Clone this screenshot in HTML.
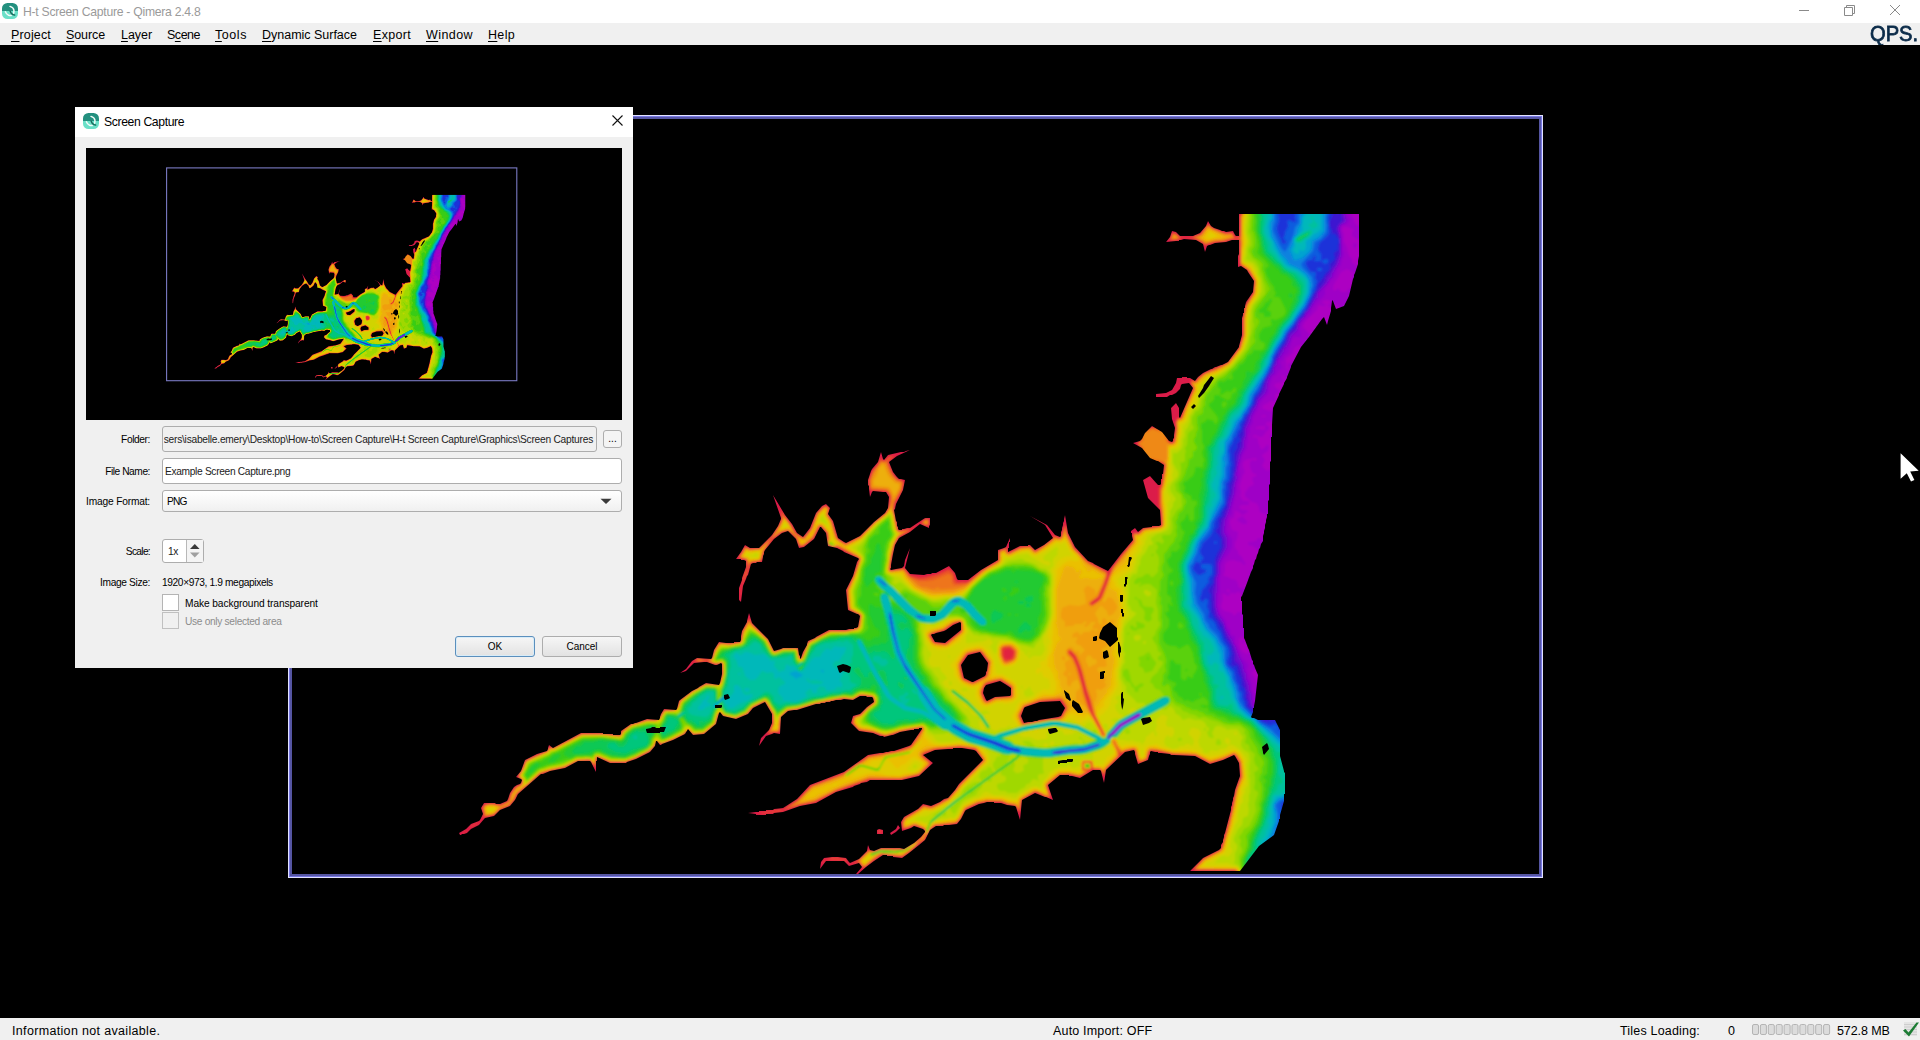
<!DOCTYPE html>
<html lang="en">
<head>
<meta charset="utf-8">
<title>H-t Screen Capture - Qimera 2.4.8</title>
<style>
*{box-sizing:border-box;margin:0;padding:0}
html,body{width:1920px;height:1040px;overflow:hidden;background:#000}
body{position:relative;font-family:"Liberation Sans",sans-serif;font-size:12px;color:#000}
.abs{position:absolute}
.t{position:absolute;white-space:nowrap;line-height:1}
#titlebar{left:0;top:0;width:1920px;height:23px;background:#fff}
#menubar{left:0;top:23px;width:1920px;height:22px;background:#f0f0f0}
#status{left:0;top:1018px;width:1920px;height:22px;background:#f0f0f0}
.m{position:absolute;top:28px;font-size:12.5px;line-height:14px;white-space:nowrap;color:#000}
.m u{text-decoration:underline;text-decoration-thickness:1px;text-underline-offset:1.5px}
.s{position:absolute;top:1023.5px;font-size:12.5px;line-height:14px;white-space:nowrap;color:#000}
#dlg{left:75px;top:107px;width:558px;height:561px;background:#f0f0f0}
#dlgtitle{left:0;top:0;width:558px;height:30px;background:#fff}
.lbl{position:absolute;font-size:10.2px;line-height:12px;white-space:nowrap;text-align:right;width:120px;left:-45px;color:#000}
.fld{position:absolute;border:1px solid #adadad;border-radius:3px;font-size:10.2px;line-height:12px;white-space:nowrap;overflow:hidden}
.btn{position:absolute;border:1px solid #adadad;border-radius:3px;background:linear-gradient(#f6f6f6,#e2e2e2);font-size:10px;text-align:center;line-height:12px}
.cb{position:absolute;width:17px;height:17px;border:1px solid #b4b4b4;background:#fff}
/*LS*/#ttl{letter-spacing:-0.266px}#m1{letter-spacing:0.154px}#m2{letter-spacing:-0.104px}#m3{letter-spacing:-0.056px}#m4{letter-spacing:-0.491px}#m5{letter-spacing:0.562px}#m6{letter-spacing:-0.013px}#m7{letter-spacing:0.310px}#m8{letter-spacing:0.419px}#m9{letter-spacing:0.320px}#s1{letter-spacing:0.332px}#s2{letter-spacing:0.171px}#s3{letter-spacing:0.188px}#s5{letter-spacing:-0.089px}#dt{letter-spacing:-0.370px}#l1{letter-spacing:-0.403px}#l2{letter-spacing:-0.447px}#l3{letter-spacing:-0.181px}#l4{letter-spacing:-0.688px}#l5{letter-spacing:-0.345px}#f2{letter-spacing:-0.321px}#f3{letter-spacing:-0.793px}#f4{letter-spacing:-0.383px}#f5{letter-spacing:-0.375px}#c1{letter-spacing:-0.095px}#c2{letter-spacing:-0.320px}#f1{letter-spacing:-0.230px}/*ENDLS*/
</style>
</head>
<body>
<!-- main 3D scene -->
<svg class="abs" style="left:0;top:45px" width="1920" height="973" viewBox="0 45 1920 973">
<defs>
<filter id="soft" x="-2%" y="-2%" width="104%" height="104%"><feGaussianBlur stdDeviation="0.8"/></filter><clipPath id="landclip"><path clip-rule="evenodd" d="M877 830l0 4 6 0 0-4-4-1zM898 825l-2 4-6 4 1 2 5-3 4-4zM1359 214l-120 0 0 22-3 0-1-1-2-4-7 1-2-1-2 0-2-1-6-2-3-2-3-5-2 5-6 7-7 3-2 0-11 0-4-4-4-1-2 6-4 5 10-1 1 0 2 0 0-1 2 0 3-1 12 1 7 4 2 8 2-6 2-1 1 0 5-2 11-1 6-2 7 0 0 1 0 13-1 2 0 11 3-1 6 4 1 2 6 9-1 11-7 10-1 4 0 2-1 0 0 2 0 1 0 2-1 0 0 2-1 3 0 17-3 11 0 1-11 15-6 3-1 0-5 2-1 0-3 2-1 0-8 4-5 4-3 4-5-3-3 0 0-1-5 0 0 1-5 0-1 5-4 7-6 3-10 1 0 3 11 0 3-2 2 0 4-2 4-4 1-4 1-1 7-1 4 5-13 30-1-1 0-9-3-5-5 5 1 11 3 9-1 7 0 1 0 2-1 1 0 2-1 1-3-1-7-9-10-6-7 7-3 6-2 2-7 2 9 5 8 10 7 3 1 0 3 2 3 2-1 9-1 0 0 2 0 1 0 2-1 0 0 2 0 1 0 2-1 1-2 0-8-9-7 4 5 18 12 12 1 15-2 1-3 0-1 0-3 0 0 1-9 1-5 4-3-4-4 3 0 2 1 0 0 3 1 4-12 14-13 17-14-7-1-1-5-2-13-14-7-14-3-18-1 4 0 2-1 2 0 2-1 3 0 2-1 2 0 2 0 1 0 1-1 1-5-2-8-10-17-9 15 9 8 13-9 7-9 5-5-5-2 0 0 1-8 0-12 6 0-1 0-3 1 0 0-3 0-3 1 0 0-4-4 9-2 1-6 2 0 10-17 10-13 10-10 0-1-1-2-6-6-7-13 7-2 0-2 0-1 1-2 0-2 0-3 1-14-1-5-6 5-20-5 12-1 6-2 2-6 1-5 1-1-1 1-1 0-2 0-1 2-11 2-9 4-7 11-6 10-8 9 4 0-2 1-1 0-7-2 0-3 0-3 2-12 8-3 0-3 1-2 0 0 1-2 0-1 0-1-1 0-2-1-1 0-2 0-2-1-1-2-11 1-1 1-5 7-14 2-10-4-1-2 0-2-2-4-5-4-10 8-6 13-6-4 1-2 1-2 0-1 0-13 3-4 5-1-1-2-7-3 10-6 7-1 2-1 3-2 6 0 2 0 3 1 1 0 3 1 8 2-5 1-1 10 1 3 0 3 5-1 11-3 5-11 9-14 14-14 7-2-1-6-4-5-17-5-7 2-6-4-4-4 2-6 7-6 15-7 9-6-4-5-9-7-9-12-20 8 23 0 1-3 7-6 9-13 13-9 0-5-3-4 7-5 7 5 0 0 1 3 0 2 1 0 6-4 11 0 2-3 8 0 12 2 2 2-16 3-7 1-3 1-1 3-11 2-1 3 0 1-1 5 0 1-5 0-1 1-2 0-2 1-2 9-11 8-6 6-2 8 8 3 9 5-1 10-8 6-12 1 0 5 6 2 13 9 2 6 3 1 1 14 6 1 1-2 3-4 14-7 14 2 20 9 4 1 0 2 2-2 11-2 1-2 0 0 1-2 0-1 0-2 0-3 1-17 0-13 7-1 1-7 3-1 3 0 1-4 7-2 6-1 1 0-1 0-2-1-1-1-7-15 0-2 1-7 2-6-12-16-16-3-10-2 8 0 1-5 9-1 5 0 1 0 3-1 2-6 0 0 1-4 0-3 0-1 0-7-1-5 8-2 8-1 1-14-1-5 3-6 8-6 4 6-2 8-8 10-1 1 0 2 0 8 3 2 0 4-2 1 1 0 4 0 5 0 1-2 9-1 2-13-2-7 4-1 1-6 3-12 9-1 1-2 8-1 1-12-1-3 5-1 3 0 1-1 2-12-1-11 4-1 0-2 1-2 0-10 7 0 3-1 1-7 0 0-1-5 0-5 0 0-1-22 0-28 15-4-3-1 3 0 1-1 2-10 3-12 6-4 11-5 6 5 2 1 1-1 3-1 1-3 1-3 2-4 6-2 6-1 2-7 3-4 0-1-1-3 0-8 0-3 5 2 6-3 6-1 1-8 3-5 5-7 4 1 2 1 0 1-1 2 0 3-1 4-4 8-4 6-7 9-2 6-6 10-4 5-6 3-6 23-20 2 0 7-3 15-3 13-7 6 0 6 0 1 1 5 10 0-11 1 0 0-3 0-1 13 6 16 0 1-1 9-3 14-7 5-6 1-5 1 0 3 4 1 0 1-1 11-4 12-6 3-5 5 6 11-1 12-10 3-11 1-1 3 4 13 3 12-5 5-6 12-6 7 12 0 9-3 7-8 8-2 8 7-10 6-2 2-1 6 1 1-17 7-6 6-1 1 0 2 0 19-6 2 0 2 0 1-1 2 0 2 0 1-1 2 0 2 0 1-1 2 0 3-1 2 0 1 0 2 0 3-1 9 1 7-4 2 0 1 0 3 0 1 1 5 0 1 1 1 4-7 5-7 7-7 2-2 7 8 8 14 2 7 3 3 0 1 1 8-2 1 0 7-3 11-2 1 0 2 0 0-1 2 0 1 0 2 0 0-1 2 0 1 0 0 1-11 16-2 1-15 5-3 0-3 1-2 0-3 1-3 0-12 2-24 17-34 13-13 14-14 9-9 1-1 1-3 0-1 0-3 0 0 1-4 0-3 0 0 1-3 0-8 1 8 1 0 1 3 0 3 0 4 0 0-1 3 0 1 0 3 0 1-1 9-1 17-6 16-3 20-11 17-5 1-1 6-2 1-1 6-1 3-2 31 0 1 0 17-4 14-13-10-8 12-5 13-1 5 0 0-1 5 0 4 0 12 2 2 1 7 9-24 24-4 6-7 8-4 1-4 3-9 4-8-2-5 5-14 8-3 5 1 9 9-3 3-2 9 3 2 2 0 1-4 5-7 6-10 6-4-1-19 0-7 3-4-1-2-5-1 6-8 8-9 4-1-1-3-4-8-1-1 0-5 0-8 1-3 4-1 7 6-8 18 0 5 5 10-3 3 4-6 7 2 0 8-7 8-6 9-6 4 0 0 1 3 0 3 0 0 1 9 1 7-5 10-8 6-5 5-10 6-4 2 0 1 0 4 0 1-1 5 0 8-1 4-5 4-8 1-1 13-6 5-1 3-1 7 0 0 1 7 0 6 2 8 1 1 1 4 13 2-20 13-7 10 4 1 0 7 3-5-15 12-10 9 0 0 1 2 0 1 0 8 2 13-8 7 0 1 1 3 12 2-13 19-18 9-2 1 2 0 1 0 1 3 10 10-4 1-4 1-2 0-2 1-1 4 1 3 0 0 1 3 0 9 1 1 1 2 0 1 0 21 1 15 8 13-4 11-5 1 1 4 7 1 13-5 14-1 6-1 2 0 2-1 3 0 2-1 2 0 2 0 1-6 23-1 2 0 2-1 3 0 2-2 3 0 3-2 2-16 8-13 13 50 0 19-25 15-11 5-14 0-2 1 0 0-2 0-2 4-14 0-7 1 0 0-19 0-1 0-1-1-1 0-1-4-15 0-26-5-10-17 0-4-2-2 0-1-1 2-5 0-4 1 0 0-2 1-5 3-26-3-7-1-3-1-1 0-3-1-1-3-10-1-2-3-8-1-2 0-10-1 0 0-7 0-6-1-1 0-6 0-7-1 0 0-4 1-1 5-13 4-11 1-2 1-2 0-2 1-2 1-4 1-1 1-4 1-2 1-4 1-1 1-4 2-3 0-5 1-3 0-2 1-3 0-3 1-3 0-2 1-3 0-3 1 0 0-13 1-1 0-7 0-1 0-7 1-1 0-10 0-12 1-1 0-12 0-12 1 0 0-12 1-17 6-13 0-1 5-10 0-1 3-5 0-1 4-10 0-1 10-19 8-10 13-18 2-2 3 8 1-4 3-10 0-3 1-7 1-1 0 1 3 8 8-3 5-10 4-17 1-2 0-2 1-2 1-3 2-6 0-3 1-5 0-1zM1073 759l0 2-1 1-5 0 0 1-3 0-1 0-3 0 0 1-2 0 0-1 0-2 5-1 1 0 3 0 0-1 3 0 1 0 1 0zM1267 743l1 2 1 4-5 6-1-2 0-1-1-5zM1058 731l-1 1-7 2-1-1-1-3 0-1 6-1 1 0 1 0zM666 727l-2 5-4 0 0 1-3 0-10 0-1-3 0-1 5-1 1-1 3 0 1 1 4 0 0-1 3 0 1 0 1 0zM1150 717l2 4-3 2-6 2-2-6 2-1zM722 705l0 2-1 1-2 0-1 0-3 0 0-2 0-1 3 0 1 0 2 0zM1065 708l-4 8-3 1-19 3-2 1-2 0-3 1-2 0-2 0-4 1-3-7 3-8 1-1 15-5 20-1zM1073 700l6 4 4 8-1 1-4 0-6-7 0-4zM728 694l2 4-2 1-3 1-1-2 0-3zM1122 692l1 0 0 6 1 1-1 8-1 3 0-1-1-6 0-1 0-8zM1064 690l5 4 2 6-1 1-4-3-2-7zM1011 688l0 7-1 1-15 1-8 4-1-1-3-7 1-5 2-3 14-4 5 3zM1104 671l1 0 0 2-1 0 0 5-1 1-3 0 0-1 0-6zM837 666l6-2 4 1 4 2-1 5-1 1-6-2-3 2-1-1zM980 652l8 11-1 8-1 1 0 2-1 2-12 6-1 0-8-4-3-13 7-10zM1107 650l1 2 1 5-2 1-3 1-1-2 0-5zM1119 642l2 6 0 4-1 1 0 4 0 1-1-2-1-4 0-1 0-5 0-4zM1096 636l1 0 0 4-1 1-3 0 0-1 0-3zM961 623l0 7-16 13-10-1-4-7 1-1 2 0 2-1 8-2 2-1 7-5 7-3zM1110 622l7 6 0 9 1 1 0 2-8 7-5-6-5-2-1-1 1-5 3-6zM930 611l5 0 1 0 0 4-1 1-5 0 0-1zM1122 609l1 0 0 4 1 0 0 3-1 1-1-1 0-3-1 0 0-4zM1121 595l2 0 0 6-1 1-1 0-1-1 0-6zM1127 577l1 1-1 1 0 5-1 1 0 1-1 1-1-1 0-2 1 0 0-7 1 0zM1131 557l1 1-2 4 0 3-1 2-1 0-1-2 1 0 1-8 1 0zM1194 404l2 2-3 3-2-2zM1214 378l-5 8-5 7-5 5-1-2 5-8 1-3 4-5 3-4z"/></clipPath>
</defs>
<rect x="0" y="45" width="1920" height="973" fill="#000"/>
<g id="scene">
<g id="bathy" clip-path="url(#landclip)"><g fill-rule="evenodd" filter="url(#soft)"><path fill="#db1c4a" d="M875 830l0 4 2 2 6 0 2-2 0-4-3-3-3 0zM1361 214l-2-2-120 0-2 2 0 20-4-5-7 1-13-5-5-6-2 3-6 9-2 1-7 2-11 0-4-4-4-1-2 2-2 6-4 5 2 2 10-1 8-2 12 1 6 4 1 6 2 2 2-2 1-3 1-2 6-2 11-1 6-2 5 0 0 12-1 2 0 11 2 2 3-1 4 3 7 10-1 11-8 14-3 12 0 17-3 12-9 12-6 4-19 8-8 7-5-2-3-1-10 1-2 2-1 5-3 5-5 3-10 1-2 2 0 3 2 2 11 0 9-4 6-6 1-3 5-1 3 3-9 20-6-7-7 7 1 11 3 9-1 10-1 2-3-3-6-7-10-6-9 9-4 6-5 2-3 2 3 3 7 3 9 11 8 3 4 3-3 15-1 2-8-9-6 4-3 2 5 18 12 12 1 13-16 3-4 4-4-4-6 5 2 9-23 29-20-10-11-12-7-14-3-18-2-2-2 4-4 18-4-3-8-9-17-9-2 2 3 3 13 7 6 10 0 2-15 10-5-5-10 1-9 5-1-1 2-10-2-2-2 2-4 8-6 2-2 2 0 9-15 9-13 10-9 0-2-5-8-9-15 7-10 2-13-1-4-4 5-20-2-2-3 4-5 15-9 3 0-2 2-12 2-9 3-5 1-2 9-4 10-8 9 4 2-2 1-10-2-2-2 0-6 2-12 8-10 2-1-2-3-16 2-6 7-14 2-10-3-2-5-1-3-3-5-11 6-5 13-6 2-2-2-2-22 5-3 4-1-1-1-4-2-2-2 2-3 10-7 9-3 9 2 17 2 2 2-2 2-4 11 1 1 1 1 4-1 9-2 4-10 8-14 14-14 7-7-4-4-16-5-7 2-6-6-6-4 2-8 9-6 15-4 6-2 1-4-4-4-7-7-9-11-20-3-2-2 2 8 23-3 8-6 9-11 11-9 0-5-3-2 2-4 7-5 7 2 2 8 1 0 5-4 11-3 10 0 12 4 4 2-2 2-16 5-11 2-9 1-1 9-1 2-2 3-12 6-7 9-8 6-2 6 6 3 9 2 2 6-2 8-6 3-3 4-9 1 0 3 3 2 13 2 2 9 2 19 10-5 16-7 14 2 20 2 2 8 3 2 2-2 9-10 2-17 0-21 11-2 3-5 10-1-4-2-2-15 0-8 3-5-10-16-16-2-9-3-3-2 3-2 8-5 9-1 8-1 1-11 1-8-1-3 2-3 5-3 10-9-1-5 0-4 3-4 4-3 4-7 6 3 2 5-2 8-8 13-1 8 3 4-1 1 2 0 5-2 8-1 2-11-2-14 8-12 9-3 2-2 8-11-1-2 3-5 8-10-1-16 5-9 6-4 5-15-2-22 0-28 15-4-3-2 2-1 4-9 3-12 6-2 2-4 11-5 6 6 4-2 2-3 1-3 3-4 6-1 5-2 2-5 2-8-1-8 0-5 7 2 6-2 4-8 4-5 5-7 4-2 2 3 4 7-2 5-5 7-3 6-7 9-2 6-6 10-4 7-8 2-5 21-19 10-3 15-3 13-7 11 0 4 9 3 2 2-2 0-11 1-1 11 5 16 0 10-4 14-7 7-8 1-1 3 2 12-5 12-6 3-4 5 5 11-1 14-12 2-7 1-1 2 2 13 3 12-5 6-7 10-5 1 1 5 9 0 9-3 7-8 9-2 7 2 2 8-11 7-2 6 1 2-2 1-17 5-4 9-1 19-6 28-5 9 1 7-4 10 1 2 1 0 1-5 4-7 7-7 2-2 2-2 7 10 10 14 2 12 4 15-5 18-3 0 1-9 12-15 5-26 4-24 17-34 13-13 14-13 9-3 1-19 2-14 2-2 2 2 2 14 2 21-3 17-6 16-3 20-11 34-12 31 0 18-4 16-15-8-7 0-1 8-3 23-2 16 2 1 1 6 7-24 24-4 6-5 6-17 8-8-2-11 9-7 3-3 3-3 7-1-1-3 2-1 3-6 5 3 4 9-7 3 3 12-5 7 3 1 1-9 9-10 6-4-1-19 0-7 3-2-1-4-5-2 2-1 6-6 6-9 4-4-5-9-1-13 1-5 6-1 7 2 2 7-8 17 0 5 5 9-3 2 2-6 7 2 2 2 0 16-13 9-6 19 3 7-5 10-8 6-5 3-2 4-9 3-2 4-1 18-2 6-7 4-8 12-5 8-2 14 1 6 2 6 1 2 3 3 8 2 3 2-2 2-19 12-6 16 7 3-2-5-14 10-9 9 0 11 3 13-8 6 0 3 10 2 3 2-2 2-13 17-16 7-1 1 1 2 9 3 3 10-4 2-3 2-5 22 3 21 1 15 8 13-4 10-4 2 1 2 4 1 13-5 14-4 19-10 38-1 1-15 8-15 15 2 2 50 0 3-3 17-22 16-13 5-14 5-20 1-26-5-19 0-26-5-10-2-2-17 0-4-2 3-15 3-26-14-37-3-41 22-56 5-27 2-40 3-66 6-13 12-29 10-19 20-27 2 5 2 2 2-2 4-14 0-3 3 3 7-3 3-2 5-10 4-17 5-15 1-9zM1266 746l1 3-2 2-1-3zM649 730l3-1 8 1-3 1-5 0zM1149 720l0 1-5 1-1-1 4-2zM1075 703l2 2 3 5-2 1-4-5zM1063 708l-3 6-2 1-19 3-14 3-2-5 3-7 14-5 19-1zM1009 688l-1 6-13 1-7 3-1 0-2-5 1-5 2-2 12-3zM839 667l5-1 5 2-1 2-4-1-3 1zM980 654l6 9-2 11-11 6-7-3-1-1-2-10 0-2 5-7zM1105 653l1 0 0 3-1 0zM959 625l0 5-14 11-9-1-2-3 0-1 10-3 9-6 5-2zM1110 624l5 4 1 12-5 4-6-5-4-2 1-4 3-5z"/>
<path fill="#e1233f" d="M878 831l-1 1 2 1 2 0 1-1 0-2-1 0zM1361 214l-2-2-118 0 0 2-1 2 0 20-1 1-4 0-3-5-7 1-13-6-3-3-2 1-6 9-7 2-5 1-9 0-5-4-2-1-1 1-3 8 6 0 10-3 9 1 8 4 2 2 1 3 2-3 7-2 10-1 7-2 8 0 1 1-1 24 4 2 4 3 7 11 0 9-1 4-6 9-2 4-2 12 0 17-4 12-11 14-24 11-5 4-4 4-4-2-1 1 0 3 3 4 0 2-12 28-2 1-1-2-3 6 1 8-2 11-2 2-2-2 0-2-2-2-3-4-3-3-8-5-1 2-3-1-7 7-3 5-1 1 0 2-3 2 3 3-1 2 3 1 9 11 11 5 2-1 2 1-4 19-4 4 0 17 4 5 1 15-2 1-16 2-6 5-5 0-1 2 1 6-25 31-6-3-14-8-14-13-7-14-2-12-1 2-2 11-2 3-5-2-7-8 5 9 0 2-17 12-2-1-4-4-6 0-4 1-12 6-1-1 1-7-3 4-6 2-1 9-1 2-16 9-13 10-11 0-2-7-6-6-13 6-11 2-14-1-3-2-4-6-3 2-10 2-1-1 2-16 3-10 3-6 2-2 10-4 10-8 1 0 7 3 1-3 0-5-3 0-3 1-13 9-11 2-2-2-3-17 0-3 1-6 8-14 1-7-1-2-5-1-5-5-4-10 0-2 10-8-10 2-5 4-1 0-2-3-3 7-5 5-2 3-2 7 0 8 2 5 3-2 13 2 3 4-1 11-3 5-11 10-15 14-14 7-1 0-6-3-2-3-5-15-4-7 1-6-2-3-2 0-2 1-6 6-6 16-6 8-2 1-7-5-16-26-2-2 3 9 1 5-4 8-6 9-13 12-9 1-5-3-3 7-4 5 1 1 6 0 2 2 0 6-4 10-3 12-1 10 1 1 1 0 2-15 4-11 3-10 3-2 6 0 2-1 4-11 8-11 8-7 7-1 8 7 3 8 2 1 3-1 9-7 6-11 1-2 2 1 5 6 1 10 1 3 9 1 19 10 2 2-6 17-6 15 1 15 1 4 10 4 2 2-2 11-2 2-10 2-17 0-22 11-6 15-1 1-2-1-1-7-1-2-14 0-8 4-1-1-6-11-16-16-3-7-1 3-1 3-5 9-1 8-1 2-10 2-11-1-3 5-3 9-2 2-13-1-6 4-2 3 1 0 3-2 13-2 9 3 5-1 1 1 1 10-3 8-2-1-1 2-1-1-1 3-8-1-15 7-11 9-2 2-1 4-2-1-1 2-2 1 0 2-9 0-4 7-2-1-1 2-2 0 0 2-7 0-16 4-9 6-3 6-18-2-20 0-28 14-2 0-2-1-1 2-3 3-8 3-11 5-2 2-3 9-4 5 4 4 0 3-2 2-5 3-4 5-2 7-2 2-6 3-10-2-6 1-3 4 2 7-3 5-2 1-7 4-5 5-6 3 1 1 4-1 4-5 8-4 7-7 10-2 5-5 10-4 5-6 2-6 24-21 24-6 13-6 12-1 2 2 2 5 1 1 1-10 2-1 12 5 15 0 10-4 14-7 6-5 1-2 1 0 1 1 1-2 2 1 12-4 12-6 0-1 3 0 0-1 1 1 1-1 4 3 11-2 11-9 2-9 2 1 2-2 1 2 12 3 12-5 6-7 10-5 2 0 8 12 0 10-4 6-3 5 1 0 6-3 6 1 1-4 1-12 2-3 6-4 8-1 18-5 28-6 10 1 6-3 4-1 9 2 2 1 1 4-7 5-7 7-8 3-1 6 8 8 14 1 10 4 2 0 15-5 18-3 3 0 1 1-12 16-2 2-12 4-30 5-23 17-33 13-13 13-13 9-3 1-26 4 0 1 8 0 15-2 20-6 16-4 22-11 32-11 31 0 20-5 11-12-6-5-2-3 2-2 9-3 23-3 6 0 11 2 4 3 5 8-23 24-5 7-7 7-17 9-8-2-11 8-8 5-2 4 0 5 1 2 11-3 2 0 8 3 1 2 0 1-7 8-7 5-7 4-5-1-17 0-8 3-2 0-4-2-1 3-8 7-8 4-2 0-4-5-12-1-9 2-2 3 0 3 4-5 18 1 6 4 9-2 2 1 1 3-2 4 1 0 12-11 9-6 16 3 5 0 6-4 9-9 7-4 4-9 5-5 4-1 15-1 4-1 4-4 5-10 12-6 8-1 16 0 6 3 6 0 2 2 4 8 2-15 10-6 4-2 9 5 6 1 0-2-4-11 1-1 12-9 10 0 8 2 3 0 11-7 8 0 1 1 3 7 2-8 14-14 1 2 2-1-1-2 3-3 9-2 1 1 3 12 8-3 2-2 1-5 2-2 24 4 21 1 14 7 14-4 9-4 1 0 2 2 4 5 1 14-5 13-4 21-11 39-1 1-17 8-9 10-1 2 42 1 1 2 4 0 3-3 17-22 16-13 5-14 5-20 1-26-5-19 0-26-5-10-2-2-17 0-4-2 3-15 3-26-14-37-3-41 22-56 5-27 2-40 3-66 6-13 12-29 10-19 20-27 2 5 2 2 2-2 4-14 0-3 3 3 7-3 3-2 5-10 4-17 5-15 1-9zM1266 746l1 3-2 2-1-3zM649 730l3-1 8 1-3 1-5 0zM1149 720l0 1-5 1-1-1 4-2zM1075 703l2 2 3 5-2 1-4-5zM1065 707l0 2-3 7-3 2-19 2-16 4-1-2-3-6 0-1 5-8 14-5 22-2zM1011 687l0 8-1 1-14 1-10 4-1-1-3-6 1-5 4-5 3-1 0 3 1-1-1-2 9-3 3 1zM839 667l5-1 5 2-1 2-4-1-3 1zM1105 653l1 0 0 3-1 0zM981 652l8 10-3 13-1 2-11 5-2 0-7-3-3-4-2-8 1-3 6-10zM1110 624l5 4 1 12-5 4-6-5-4-2 1-4 3-5zM961 623l0 8-15 13-11-2-5-6 2-2 14-4 8-6 5-2z"/>
<path fill="#e63533" d="M878 831l0 2 4-1-1-2-2 0zM929 519l-3 0-7 5 2-1 7 3 1-1zM1361 214l-2-2-117 0 0 2-2 1 0 21-1 1-4 0-3-4-7 0-13-5-3-4-2 1-6 9-9 3-12 0-4-3-2-1-2 0 0 3-3 4 7 0 11-2 2 1 7 0 7 4 2 3 3-2 6-2 11-1 6-2 8 0 1 2 0 24 9 6 6 10-1 11-8 14-3 12 0 17-3 12-2 4-10 12-24 11-5 3-3 4-2 0-2-1-1 0 0 3 3 6-13 28-1 1-2 0-2 3 0 8-2 12-1 2-2 0-2-2 0-2-7-9-5-3-2 1-4 0-1-2-7 7-3 5-1 1 1 2-3 3 3 3-1 2 4 3 4 5 5 4 8 3 2-1 2 1 1 2-3 17-3 7 0 17 2 3 1 14-1 2-16 2-2 1-4 4-6 1 1 5-1 2-13 16-6 9-5 9-2 7-6 15-5 5-3 2-1 0-1-1 8-6 5-12 4-12-1-1-19-10-14-14-7-13-1-10-1-2-3 13-2 2-5-2-3-3 1 3 0 2-8 7-9 6-2 0-5-5-8 1-11 6-2 0-1-2 0-4-2 2-6 2 0 9-3 3-15 8-13 11-11 0-1-2-2-7-5-4-1 0-11 5-13 3-5 0-8-1-4-3-3-5-11 3-3 0 0-5 2-14 2-7 4-7 1-2 12-6 7-6-9 5-7 2-4 0-1-1-4-20 2-7 7-12 2-9-1-1-5-2-4-3-2-4-4-8 0-2 8-7-6 1-6 5-1 0-2-3-1 0-2 6-5 6-4 11 1 7 1 3 6-1 10 1 3 5-1 10-3 7-12 10-13 13-15 8-7-4-3-3-4-16-4-6 1-7-3-2-3 1-6 7-6 15-7 9-2 0-4-3-3-3-4-7-11-16 0 2 2 7-4 9-6 10-12 11-2 1-8 0-5-2-3 6-4 4 1 1 7 1 1 2 0 6-4 11-3 11 0 10 2-14 5-12 3-9 2-2 8-1 1-1 3-10 9-11 8-7 4-1 3 0 8 7 3 8 3 0 3-1 7-6 2-2 5-10 1-1 2 1 5 6 1 10 2 3 7 1 4 1 5 4 12 5 1 2 0 2-5 15-7 14 2 19 12 6-2 10-1 3-10 3-19 0-21 12-6 14-1 1-1 0-1-2-1-7-2-1-12 0-10 4-1-2-6-11-15-14-3-7-6 13-2 10-1 1-11 2-9-1-4 4-2 4-1 6-2 2-2 1-12-1-5 3-1 2 3-2 11-1 10 3 6-1 1 1 1 10-2 6-1 2-3 0-1 3-10-1-13 7-13 10-2 5-1 1-2 0 0 1-1 0-1 2-8 0-5 7-4 1 0 2-7 0-17 4-10 7-1 3-1 2-19-2-20 0-26 14-3 0-2-1-3 4-9 4-12 6-4 10-4 5 0 1 4 3 0 3-2 2-4 2-2 2-4 6-1 5-2 2-7 3-8-1-4 0-4 1-1 2 0 3 1 4-3 6-2 2-7 3-4 5-6 3 1 0 3-1 4-4 8-4 6-7 10-2 6-6 10-4 4-5 3-6 23-21 24-6 13-6 13-1 2 3 2 4 1 1 1-8 1-3 15 5 14 0 22-10 6-6 2-3 8 0 7-3 13-6 2-2 2 1 2-2 3 3 7 0 4-1 11-9 2-8 2-2 1 1 1-1 4 2 8 2 3 0 10-4 6-7 12-6 3 2 6 11 0 9-4 8-2 2 0 1 2 0 5-2 4 1 1-1 2-15 7-7 8-1 19-5 28-6 10 1 7-4 4 0 9 2 1 2 1 3-8 6-6 7-7 2-1 3 0 3 6 7 14 2 12 4 17-5 20-4 1 1-1 2-10 15-2 2-14 4-28 5-24 17-33 13-13 14-14 9-2 1-19 2-6 1 4 1 19-2 19-7 16-3 21-11 33-12 32 0 18-4 12-12-8-7 0-1 1-2 11-4 23-2 16 2 4 3 5 7 0 2-24 24-4 7-6 6-7 4-11 5-8-1-10 7-8 5-3 5 1 6 2 0 10-4 8 3 2 2 0 3-4 5-10 8-6 3-24 0-7 3-6-2-1 2-7 7-9 5-2 0-4-5-8-1-12 1-3 3 0 2 4-4 18 0 6 5 8-3 2 1 2 3 0 3 13-10 8-5 19 3 6-4 10-9 6-4 5-10 5-4 5-1 17-2 5-5 3-7 2-2 11-6 10-2 14 1 7 2 5 1 3 1 3 7 1 0 1-13 13-8 3 0 7 4 6 2 0-3-3-8 0-2 12-10 10-1 8 2 4 0 11-7 8 0 2 2 2 6 2-8 15-15 4-3 8-2 3 3 2 10 2 0 6-2 1-1 2-7 2-2 23 4 21 1 15 8 2 0 11-4 10-4 2 0 1 1 4 7 1 13-5 14-4 19-10 39-2 2-17 9-9 9 0 2 41 0 1 1 0 2 4 0 3-3 17-22 16-13 5-14 5-20 1-26-5-19 0-26-5-10-2-2-17 0-4-2 3-15 3-26-14-37-3-41 22-56 5-27 2-40 3-66 6-13 12-29 10-19 20-27 2 5 2 2 2-2 4-14 0-3 3 3 7-3 3-2 5-10 4-17 5-15 1-9zM1266 746l1 3-2 2-1-3zM649 730l3-1 8 1-3 1-5 0zM1149 720l0 1-5 1-1-1 4-2zM1075 703l2 2 3 5-2 1-4-5zM1066 707l0 2-4 7-3 2-19 3-16 3-2-2-2-6 4-9 15-6 22-1zM1011 687l1 8-2 2-15 1-9 4-2-2-2-7 1-5 4-5 12-3 3 0zM839 667l5-1 5 2-1 2-4-1-3 1zM1105 653l1 0 0 3-1 0zM1070 652l1 0 4 5 4 9 3 7 4 18 6 20 0 1-7-19-7-26-4-9-4-5zM980 651l2 1 7 11-2 11-2 3-10 5-3 1-7-3-2-2-3-13 7-11 2-1zM1006 649l4 0 3 3-1 5-4 2-1 0-2-1-1-4 0-3zM1110 624l5 4 1 12-5 4-6-5-4-2 1-4 3-5zM961 622l0 9-16 13-8-1-3-1-4-6 0-1 1-1 13-4 10-7 4-1z"/>
<path fill="#eb5725" d="M827 859l17 1 3 2-2-3-13-1zM878 831l1 1 2 0 0-1zM478 823l-6 3-1 1zM929 520l-1-1-3 1-3 2-1 1 7 3 1-3zM1170 240l6 0 5-2-5-4-3-1zM1361 214l-2-2-117 0 0 2-1 1 0 20-1 2-5 1-2-2-1-3-8 0-13-5-2-3-1 0-7 9-10 4 6 1 7 4 1 2 4-2 6-1 8-1 8-2 8 0 1 1 1 25 8 5 6 10-1 13-7 10-2 7-2 10 0 17-3 11-12 15-24 11-5 4-3 4-5-1 0 3 3 3 0 3-9 18-3 9-2 2-2 0-2 3 0 9-1 9-2 3-3 0-2-3 1-1-4-6-3-3-5-3-1 2-3-1-3 1-2-1-5 5-3 6 1 2-3 2 0 1 3 3-1 2 3 3 7 8 7 3 3-1 4 1 1 2 0 3-3 17-2 4 0 18 2 4 0 14-2 2-16 2-4 4-3 1-2-1-2 1 1 7-13 16-7 9-4 8-3 9-7 16-3 3-5 3-1 0-1-2 1-1 7-5 6-12 3-9 0-3-19-11-14-13-7-15-2-9-3 11-2 2-2 0-4-2 0 2-3 3-15 10-2 0-4-4-10 1-10 5-2 0-1-1 0-4-8 3 0 10-2 1-16 10-8 7-6 4-11 0-2-3-1-6-4-4-4 2-7 3-15 4-4 0-10-3-5-7-13 2-2-1 3-19 2-7 5-8 9-4 3-3-11 2-2 0-1-2-4-17 0-4 2-6 7-12 1-8-2-1-3-1-3-2-3-5-4-9 0-3 5-5-4 1-4 4-2 0-2-1-1 0-1 4-6 7-4 9 1 8 1 2 16 1 4 5-1 10-4 7-12 10-14 14-13 7-3 0-6-4-2-4-4-14-5-7 1-7-2-2-3 1-5 5-2 4-4 12-6 8-2 2-1 0-5-3-3-2-4-7-10-15 1 8-2 6-9 13-12 11-9 0-5-2-2 5-4 5 1 1 5 1 2 1 0 8-4 10-1 6 5-10 3-10 2-2 7-1 2-1 2-8 7-11 10-9 8-2 9 9 2 6 4 1 10-8 6-11 1-1 1 0 6 6 1 6 0 4 2 3 5 2 3 0 20 10 2 2-6 16-7 16 1 14 1 4 10 5 2 2-2 10-2 3-11 2-16 0-21 11-6 14-2 3-1-1-1-1-1-7-1-1-14 0-4 2-5 1-6-12-17-16-2-5-2 6-4 6-1 9-2 3-10 1-11-1-4 8-2 7-2 2-13-1-4 2 6 1 7-1 8 3 4-1 3 0 1 10-2 8-1 2-2 0-1 2-3 0-8-1-13 7-12 9-2 3-1 4-1 1-2-1-1 1 0 2-10 1-4 7-3 0-1 2-9 0-15 5-9 6-2 4-2 1-16-2-21 0-28 14-4 0-2 3-21 10-2 3-3 7-3 4 0 2 3 2 1 1-1 4-5 3-3 2-3 6-2 6-2 1-6 3-11-1-5 1-2 3 1 5 0 2-1 2 10-2 7-6 9-4 5-6 2-5 23-20 2-1 24-6 13-7 12 0 2 2 3 5 1-9 1-1 4 1 9 4 16 0 10-4 13-7 5-5 2-3 1 1 1-2 3 2 2-1 17-7 6-5 3 1 1-1 3 3 8 0 4-1 10-9 2-8 2-2 2-1 3 3 12 2 11-4 6-7 11-6 1 0 8 13 0 10-5 9 3 0 2-1 5 0 2-4 0-11 3-3 5-4 9-1 17-5 30-6 8 1 8-4 12 1 2 2 1 4-7 6-7 7-7 2-1 6 4 5 3 2 14 2 6 2 6 2 15-5 18-4 3 0 1 1 0 2-11 15-2 2-12 4-29 5-25 18-33 13-13 13-15 10-5 0-18 3 20-2 19-6 15-3 21-11 35-12 29 0 20-5 11-11-8-7 0-2 2-1 12-4 5 0 16-2 6 0 10 1 3 1 7 10 1 2-23 23-5 6-8 9-16 8-9-1-2 2-16 10-2 4 0 6 3 0 7-3 3 0 8 3 2 2-2 4-5 6-14 9-22 0-8 3-3 0-4-2 0 2-9 8-6 3 6-1 3 3 1 2 1 0 18-13 20 2 8-5 7-7 7-4 5-10 4-4 4-1 15-1 4-1 3-3 4-8 3-4 12-5 12-2 10 0 9 3 6 1 2 2 2 5 2-12 12-8 4 0 9 4 4 1 0-2-3-8 0-2 12-10 11-1 10 2 9-5 0-1 3-2 2 1 6 0 4 6 2-6 13-13 0-2 1-1 2 0 2-2 3-1 7-1 2 2 3 11 2 0 5-2 1-2 1-5 2-3 4 0 21 4 14 0 7 1 13 7 3 0 11-3 10-5 2 0 5 8 1 15-4 12-4 20-11 39-3 3-15 8-10 10 0 1 42 0 1 1 0 2 3 0 3-3 17-22 16-13 5-14 5-20 1-26-5-19 0-26-5-10-2-2-17 0-4-2 3-15 3-26-14-37-3-41 22-56 5-27 2-40 3-66 6-13 12-29 10-19 20-27 2 5 2 2 2-2 4-14 0-3 3 3 7-3 3-2 5-10 4-17 5-15 1-9zM1266 746l1 3-2 2-1-3zM649 730l3-1 8 1-3 1-5 0zM1149 720l0 1-5 1-1-1 4-2zM1075 703l2 2 3 5-2 1-4-5zM1066 707l0 2-4 7-1 2-3 1-19 2-14 4-3-2-2-6 0-3 3-6 2-2 15-5 21-2 2 2zM1011 686l1 2 0 7-1 2-5 1-11 0-7 4-2 0-2-2-3-8 3-6 1-2 13-4 3 0zM839 667l5-1 5 2-1 2-4-1-3 1zM1105 653l1 0 0 3-1 0zM981 651l8 11 0 3-2 11-2 1-11 6-3 0-7-3-2-2-2-10 0-5 6-8 2-2 9-2zM1069 651l3 1 3 3 5 11 7 26 3 9 3 12 7 13 0 2-10-16-6-20-7-25-4-9-4-5-1-1zM1010 647l3 2 2 2-1 6-2 3-6 1-2-1-2-5 0-6 2-2zM1110 624l5 4 1 12-5 4-6-5-4-2 1-4 3-5zM962 623l-1 9-15 12-11-1-2-1-3-6 0-1 1-2 13-3 9-7 6-2 1 0z"/>
<path fill="#ee741b" d="M1084 763l-1 4 1 2 5 0 2-1 0-4-1-1-5-1zM747 569l-3 10 2-5zM922 523l2 1 3 1 1-1 0-4-3 0zM1171 239l6 0 2-1-3-3-3-1zM1194 237l0 1 3 1 6 3 2 2 10-3 8 0 11-3-2-4-8 0-13-6-3-3-7 10zM1361 214l-2-2-116 0 0 2-2 2 0 21-1 1 1 3 0 23 9 7 5 10-1 12-8 14-2 12 0 17-4 12-12 15-11 6-11 4-7 5-3 4-4-1 0 3 2 4 0 1-12 29-2 1-2 0-1 3 0 8-2 12-2 2-4-1-2-2 0-2 1-2-3-4-6-5-1 2-5-2-4 2-2-1-4 4-3 5 2 1 0 1-4 3 4 4-1 3 9 10 6 2 1-1 2 0 4 1 3 3-3 20-2 5 0 13 1 10 1 12-2 2-15 2-3 1-4 4-5 0 0 8-12 14-9 12-10 27-2 4-2 2-7 4-1 0-1-1 0-1 8-6 5-12 3-9 0-4-18-9-14-14-7-14-1-6-1-2-3 10-2 2-2 0-3-2-4 4-15 11-2-1-4-4-9 1-12 6-1 0-2-2 0-3-6 2-1 1 0 9-1 1-16 9-12 11-4 2-6 1-6 0-2-3 0-5-1-2-3-1-15 6-7 1-7 0-9-4-6-8-14 2-1-1 0-4 5-21 4-9 11-6-3 0-7 2-2-2-4-21 1-7 7-13 1-7-5-2-6-7-4-11 0-2 3-1 0-1-5 4-5 0-1 3-5 6-4 10 1 7 1 1 14 1 3 2 2 4 0 4-2 8-2 5-12 9-15 15-14 7-3-1-5-3-2-3-5-15-4-8 1-5-1-2-2 0-3 2-5 5-6 16-7 8-2 0-7-5-7-11-4-6-2-2 1 5-2 4-9 14-13 12-9 1-3-2-2 0-5 9 0 1 5 0 2 2 1 7 1-3 2-2 8-1 2-1 3-10 7-11 10-8 6-1 2 0 7 7 4 8 1 1 3-1 9-8 5-10 2-2 2 1 6 7 1 6-1 4 1 2 4 1 5 0 19 10 3 2 0 3-6 15-6 15 1 18 4 2 7 3 1 1-2 12-2 2-10 2-16 0-15 7-8 5-5 14-2 2-1 0-2-3 0-6-1-1-14 0-9 3-2-2-5-11-16-15-2-4-6 12-1 9-2 2-9 1-12 0-3 4-3 9-2 3-13-1-3 2 12-1 7 3 4 0 3-1 2 2 0 10-2 8-1 1-2 0-1 2-10-1-15 8-12 9-2 7-3 0-1 2-9 1-5 7-3 0 0 2-1 1-8-1-17 5-9 7-2 4-18-2-20 0-29 15-3-1-3 4-21 9-4 11-3 4 0 1 4 3-1 4-8 6-3 5-2 6-1 1-7 4-10-2-6 1-2 3 2 5 0 3 9-2 6-5 9-4 5-6 2-5 25-21 25-7 11-6 13 0 5 6 1-8 1-2 14 6 14 0 24-11 5-5 2-4 2 0 2 1 3 0 20-9 3-3 2 1 1-2 5 4 9-1 2-1 10-8 2-9 3-2 1 0 4 3 8 2 3 0 11-5 5-6 13-6 3 3 5 10 1 9-5 10 4-2 5 1 1-3 0-7 1-5 7-7 10-1 18-6 28-5 10 1 7-4 3 0 10 1 1 2 1 4-1 2-7 5-6 6-6 2-1 1-1 5 5 6 4 1 11 1 11 4 2 0 14-4 22-4 1 1 0 1-10 16-3 3-14 4-27 5-25 17-32 12-14 15-11 7 13-4 15-3 21-11 32-11 32 0 18-5 2-1 9-9 0-2-7-6 0-2 2-2 10-3 24-3 4 0 13 2 3 3 6 9-23 24-5 7-8 8-17 9-7-2-9 7-10 5-2 4 0 5 1 1 10-3 2 0 7 3 3 2-1 4-7 7-14 9-22-1-8 3-5-1-6 6-5 4 1 1 5 5 10-9 8-5 15 3 5 0 10-7 6-6 5-3 6-11 6-4 18-2 4-1 3-3 4-9 2-2 11-5 9-2 16 0 6 3 7 1 2 2 2 4 2-11 1-2 13-7 1 0 9 5 4 1 0-3-3-8 1-2 13-10 10 0 10 2 7-4 1-1-5-1-1-1 0-7 1-1 8 0 1 1 1 6 7 1 4 5 2-6 12-12 0-4-2-4 1-1 3 4 1 1 2 0 3-2 8-1 2 2 3 10 2 0 4-1 2-2 1-6 2-2 7 0 17 4 22 1 14 7 12-3 11-5 2 0 2 2 4 6 1 15-6 15-3 18-11 39-2 2-16 8-9 10 41 1 1 1 0 2 3 0 3-3 17-22 16-13 5-14 5-20 1-26-5-19 0-26-5-10-2-2-17 0-4-2 3-15 3-26-14-37-3-41 22-56 5-27 2-40 3-66 6-13 12-29 10-19 20-27 2 5 2 2 2-2 4-14 0-3 3 3 7-3 3-2 5-10 4-17 5-15 1-9zM1266 746l1 3-2 2-1-3zM649 730l3-1 8 1-3 1-5 0zM1149 720l0 1-5 1-1-1 4-2zM1075 703l2 2 3 5-2 1-4-5zM1067 707l0 2-4 7-4 3-18 2-7 2-10 2-2-1-3-7 0-3 5-8 15-5 22-2 2 1zM1012 686l0 10-1 1-15 1-8 4-2 0-2-2-3-6 0-3 3-7 3-2 7-2 7-1zM839 667l5-1 5 2-1 2-4-1-3 1zM1105 653l1 0 0 3-1 0zM981 651l9 11-3 14-2 2-11 5-2 0-8-3-2-3-2-7 0-7 6-9 6-2zM1069 650l2 0 5 6 6 15 5 19 4 11 3 13 11 21-1 1-1 0-1-2-2-4-10-18-7-19 0-4-6-22-4-9-4-3-1-3zM1010 646l5 4 0 6-2 4-7 2-2-1-3-6 0-6 2-2zM1110 624l5 4 1 12-5 4-6-5-4-2 1-4 3-5zM962 622l0 10-16 13-12-2-5-7 0-1 2-2 13-4 9-6 5-2 3 0z"/>
<path fill="#ef8916" d="M1085 763l-1 1 0 4 1 1 5 0 1-1 0-4-1-1zM697 661l2 0 5-1-5-1zM770 540l-10 9-10 1-4-2-6 9 7 2 1 2 0 3 4-3 8-1 3-9zM923 522l2 2 3 0-1-4-1 0zM1173 235l-1 4 6-1 0-1-3-2zM1196 237l7 4 2 2 2 0 8-2 12-2 6-1 0-2-2-2-5 1-15-6-2-3-1 0-5 7-2 3zM1361 214l-2-2-116 0 0 2-2 2 0 45 0 3 8 6 6 10 1 4-1 9-8 13-3 12 0 17-4 14-11 14-12 6-12 5-6 5-2 3-2 1-3-1 0 2 3 4 0 1-9 18-4 12-3 1-2 3 0 6-2 13-1 1-3 1-3-1-2-3-2-4 2-2-3-3-1 1-2 0-8-3-4 3-3 1-1-1-1 1 1 1 0 4-1 3-4 3 5 4 0 3-1 1 7 8 1-2 8 2 5 2 2 3-3 20-2 6 0 11 2 23-1 2-3 1-15 2-5 4-5 0 0 8-17 22-4 5-11 30-4 3-5 4-2 0-2-2 0-1 9-7 8-20 0-3-19-10-14-14-7-15-1-5-2 8-2 2-3 0-3-1-2 2-16 12-3 0-4-4-9 0-12 6-3-1 0-3-5 1-1 1 0 8-2 3-14 7-17 15-10 3-17 1-2-2-4 2-2 0-5-2-5 0-13-10-6-7-13 2-1-2 0-2 2-15 3-10 3-5 2-3 8-4-9 1-1-2-4-18 0-9 8-14 1-6-1-1-4-1-5-5-3-5-3-8-5-1-8 11-2 7 0 7 1 1 15 1 3 3 2 5-1 9-4 7-13 11-13 13-15 8-2-1-6-4-3-3-4-14-4-8 1-6-2-2-2 1-6 5-6 16-8 10-2 0-7-5-5-9-7-9-1 6-3 6-6 8 1 1 8-6 7-1 8 7 3 8 2 0 4-2 7-6 5-11 1-1 3 0 6 7 1 4-1 7 2 2 3 1 6 0 21 12 0 2-5 16-7 14 2 19 11 6 0 4-1 7-2 3-12 3-16 0-20 10-2 2-6 14-2 1-2-3-1-6-1-1-11 0-9 3-2 0-2-1-5-11-16-16-2-3-6 11-1 8-2 3-10 2-10-1-5 7-2 7-2 2-3 0 2 2 5 1 7-1 1 1 0 11-2 8-1 2-2-1 0 2-12 0-13 7-10 7-3 3-1 5-2 2-2-1 0 2-1 1-9 0-3 4-1 3-1 1-2-1 0 2-2 1-9 0-16 4-9 7 0 3-2 1-6 0-10-1-22 0-28 14-4-1-2 4-20 8-2 2-2 5-5 9 0 1 4 2 0 4-2 3-4 1-2 3-3 4-2 7-2 2-8 3-8-1-4 0-3 1-1 3 1 6 3 0 6-1 7-6 8-3 5-6 2-5 23-21 12-4 13-2 15-7 10-1 3 2 1 2 2 2 0-6 2-3 3 1 10 4 16 0 9-3 14-7 5-5 2-4 2-1 3 2 4-1 18-8 3-3 2-1 3 1 2 3 9-1 3-1 10-9 2-8 2-2 1-1 4 3 9 3 3 0 11-5 6-7 11-5 1 0 7 10 2 4 0 9-4 8 4-1 4 0 1-1 1-13 3-4 5-3 10-2 19-5 23-5 7 0 6 1 4-3 4-2 12 2 2 3 0 3-7 6-7 7-7 3 0 5 5 6 3 1 10 1 13 4 16-5 18-3 4 0 1 2-3 5-9 13-16 6-27 4-25 18-32 12-13 14-7 5 2 0 5-2 16-4 20-10 33-12 33 0 18-4 10-10 0-1-7-6-1-3 4-3 9-3 24-2 18 2 3 3 5 8 0 2-23 24-5 6-7 8-16 9-3 0-6-1-6 4-13 8-2 4 1 5 11-4 7 3 4 2-1 4-6 7-15 10-24 0-6 2-3 0-2-1-10 10 4 5 3-1 8-7 8-5 15 2 6 0 6-4 12-12 1 1 2-1 1-3 3-4 2-4 4-3 22-3 3-3 5-9 1-2 12-6 9-2 16 1 6 2 7 1 2 2 2 3 2-10 12-7 4-1 9 5 3 0-1-4-2-5 0-3 13-10 10-1 11 2 7-4-1 0-3 0-1-2 1-8 9 0 1 7 7 0 4 4 1-4 13-12-1-5-4-9 0-1 1-1 5 9 3 3 4-2 8-2 3 3 2 10 5-1 2-2 2-6 1-2 1-1 9 1 15 3 22 1 14 8 14-4 10-5 3 3 4 7 1 13-5 14-7 34-7 24-3 4-16 8-8 8 0 1 36 0 4 1 2 1 0 2 2 0 3-3 17-22 16-13 5-14 5-20 1-26-5-19 0-26-5-10-2-2-17 0-4-2 3-15 3-26-14-37-3-41 22-56 5-27 2-40 3-66 6-13 12-29 10-19 20-27 2 5 2 2 2-2 4-14 0-3 3 3 7-3 3-2 5-10 4-17 5-15 1-9zM1266 746l1 3-2 2-1-3zM649 730l3-1 8 1-3 1-5 0zM1149 720l0 1-5 1-1-1 4-2zM1075 703l2 2 3 5-2 1-4-5zM1067 706l0 3-5 9-3 1-7 1-29 5-1-1-3-7 0-3 5-8 15-6 5-1 17-1 2 2zM1012 686l1 10-2 2-15 1-7 3-3 1-3-3-2-6 0-3 3-7 2-2 8-2 7-1zM839 667l5-1 5 2-1 2-4-1-3 1zM1105 653l1 0 0 3-1 0zM981 650l9 12-2 13-1 2-13 7-2 0-8-3-2-2-1-2-2-10 0-4 7-10 4-1zM1069 649l2 1 6 6 4 10 6 22 3 9 4 14 2 6 9 17-1 2-2 0-14-27-4-13-8-29-4-9-4-4-1-2 0-1zM1006 645l5 1 5 5 0 4-1 4-3 2-4 2-3 0-2-2-2-6 0-7 2-2zM1110 624l5 4 1 12-5 4-6-5-4-2 1-4 3-5zM962 622l0 10-16 13-12-1-2-2-3-6 2-3 12-4 11-7 4-1 3 0z"/>
<path fill="#f09e10" d="M920 840l-15 10-24 0-8 3-4-1-9 8 0 1 4 4 1 0 9-8 7-4 8 0 11 2 3 0 13-11zM1084 763l0 5 6 0 0-5zM767 544l-2 1-5 5-11 0-3-1-5 7 0 1 6 1 1 2 1 2 3-1 8-1 2-9 5-6zM926 521l-2 2 3 1 0-3zM784 518l-2 5-7 12 5-4 6-2 3 1 5 3-4-8zM882 463l-4 5-6 12 0 6 1 1 15 1 2 2 2 4 1 6 7-11 0-6-4-1-5-5-3-5-3-8zM1173 236l0 2 4 0-2-3zM1198 238l6 3 1 1 3 0 6-2 8 0 9-3 1-1-1-1-6 0-12-5-4-3-1 0-5 7-2 2-3 1zM1361 214l-2-2-116 0 0 2-1 2-1 23 1 3-1 9 0 12 9 7 6 10 0 3-1 4 0 6-8 13-2 12 0 17-4 13-12 16-12 6-11 4-4 3-5 6-4 0 2 6-8 18-4 11-2 2-2 0-2 2 1 7-2 13-2 2-3 1-3-1-1 2 0 13-2 2 2 5-3 19-2 6 0 11 2 20-1 4-1 1-3 1-15 2-5 5-4 0 0 7-20 26-5 9-2 7-5 14-4 4-6 4-2 1-2-2-1-2 3-3 6-4 6-14 2-6 0-2-17-10-4-3-2-3-9-9-8-17-1 1-1 4-2 2-3 1-3-1-10 8-10 6-1-1-4-4-9 1-11 5-3 0-1-1-1-2-4 1-1 9-2 2-10 5-6 5-6 5-11 9-12 4-18 1-12-3-6-3-11-11-2-4-1-1-11 2-3-1-1-2 3-15 3-11 3-6 7-5-6 0-2-2-2-14-2-4 0-8-5 10-12 9-14 15-14 7-3 0-8-6-5-17-5-7 1-6-1-1-1 0-7 7-5 13-7 10-2 1-2 0-4-2 2 7 1 1 3-1 8-7 6-11 2-1 1 0 7 7 1 6-1 5 2 2 4 1 2 0 1-1 2 1 18 9 3 3 0 3-3 10-8 19 1 19 10 4 2 2-2 10-2 4-11 3-16 0-15 7-7 4-6 15-2 1-1 0-2-2-1-8-14 0-7 3-2 0-2-1-6-12-17-16-5 9-2 9-2 2-9 2-11-1-4 6-3 8-3 3 6 2 6-1 1 2 1 9-3 9-1 2-3 2-8-1-4 0-13 7-10 8-2 3-1 4-2 2-2-1 1 2-1 1-10 0-3 4-1 3-1 1-2-1 0 2-1 1-9 0-16 4-8 6-4 6-18-2-20 0-29 14-3 0-3 3-18 8-3 2-3 8-3 5 0 2 3 3 0 4-2 2-4 2-2 2-3 4-2 8-9 5-7-2-8 1-2 2 2 7 7-1 8-7 7-2 5-6 3-6 12-9 12-12 24-6 13-6 13-1 4 5 1-6 1-2 6 1 9 4 14 0 10-4 14-7 4-4 2-3 1-2 3 0 1 2 3 0 10-4 10-5 3-4 2 1 1-1 1 0 4 4 10-2 11-8 2-10 2-2 2 0 3 3 11 3 11-5 7-7 10-5 3 0 8 13 0 10-3 7 7 0 1-3 0-6 1-5 7-7 10-2 19-5 28-6 9 1 6-3 4-1 8 1 2 1 2 3 1 3-2 2-7 5-6 7-6 2-1 5 4 5 3 1 13 2 3 1 9 3 16-5 20-4 2 2 0 2-4 7-7 10-4 2-7 3-33 6-7 5-4 2-11 8-3 3-31 11-17 17 19-4 24-12 30-11 32 1 18-5 9-10-7-6-1-3 3-3 7-2 8-2 5 0 16-2 15 2 3 1 4 6 4 5 0 2-24 24-8 10-4 5-13 7-4 1-4 0-4-1-6 5-12 7-2 4 0 4 3 0 6-3 3 0 7 3 3 2 0 4-5 6 7-7 1-3 6-5 21-2 3-3 4-9 2-2 12-6 10-2 15 0 6 3 7 1 4 3 1-8 3-2 11-6 3 0 9 4 2 0-2-8 0-3 11-10 3-1 9 0 8 2 3 0 5-3-3-2 0-8 1-1 8 0 2 1 0 4 1 2 6 0 4 2 0-1 13-13 0-5-5-9 0-1 1-1 2 0 3 6 3 5 12-3 2 0 2 3 1 6 2 3 6-2 2-7 2-2 7 0 15 4 23 1 15 7 12-3 12-5 3 1 4 7 2 16-5 13-8 34-6 23-3 4-17 9-7 8 0 1 39 0 2 2 0 2 2 0 3-3 17-22 16-13 5-14 5-20 1-26-5-19 0-26-5-10-2-2-17 0-4-2 3-15 3-26-14-37-3-41 22-56 5-27 2-40 3-66 6-13 12-29 10-19 20-27 2 5 2 2 2-2 4-14 0-3 3 3 7-3 3-2 5-10 4-17 5-15 1-9zM1266 746l1 3-2 2-1-3zM649 730l3-1 8 1-3 1-5 0zM1149 720l0 1-5 1-1-1 4-2zM1075 703l2 2 3 5-2 1-4-5zM1068 706l0 3-5 8-4 3-6 0-31 5-4-8 0-3 4-7 2-2 16-6 21-2 4 3zM1013 687l0 9-2 2-15 1-7 4-3 0-3-2-3-7 0-3 3-7 4-3 9-2 5-1 9 6zM839 667l5-1 5 2-1 2-4-1-3 1zM1105 653l1 0 0 3-1 0zM981 650l2 1 8 11-3 14-2 2-12 6-2 0-9-3-2-2-3-12 0-3 9-12 8-2zM1068 649l3 0 6 6 4 8 3 10 3 14 5 13 3 13 10 21-1 3-1 0-1-2-15-27-4-12-3-13-5-16-3-8-4-4-1-2 0-2zM1010 645l4 2 3 3 0 5-1 4-3 2-7 3-3-2-2-5-1-9 2-2 4-1zM1110 624l5 4 1 12-5 4-6-5-4-2 1-4 3-5zM962 622l1 5 0 5-16 13-4 1-9-2-2-2-4-7 2-2 13-4 9-7 7-2z"/>
<path fill="#edaf0a" d="M918 841l-13 9-24 0-9 3-3 0-8 8 3 4 16-12 21 2 13-9zM485 809l1 5 2 0 6-1 5-6-9-2-4 1zM1084 763l0 5 6 0 0-5zM1071 673l-2 0-1 2 2 0 1-1zM1088 655l-2 3 0 4 2 3 0 2 2 0 3-2 3-1 1-2-1-3-3 0-2-3zM764 547l-4 3-11 1-3-1-4 6 1 1 4 1 2 3 3-1 7 0 1-2 2-7zM784 519l-6 13 9-3 1 0 4 2-5-9-2-3zM882 465l-3 4-2 7-3 4 0 5 4 1 11 1 2 2 3 6 1 0 4-8 0-3-4-1-6-6-2-3-3-8zM1200 238l6 3 2 0 7-2 9-1 6-2-5 0-17-8-4 7zM1361 214l-2-2-115 0 0 3-2 2 0 9 1 18-2 17 1 2 6 5 4 4 4 8 0 6-1 8-7 12-3 15 0 14-4 13-6 9-6 7-10 6-14 5-8 8-3 1 2 4-1 3-8 18-4 10-3 2-1 0-1 1 0 7-2 13-2 3-4 0-2 2 0 13-1 2 0 4-3 19-2 6 0 10 1 5 1 16 0 4-3 2-15 2-7 5-4 0 0 8-5 6-7 11-7 7-5 10-3 9-5 13 0 3 1 0 1 0 2-4 2-1 4 2 4 7 0 2-1 2-3 4-4 2-1-1-1-4-5-5-2 0-5 7 1 3 2 3 0 3 3 3 1-1 0-4 2-2 1 0 2 4 3 2-1-2 2-2 2 0 1 1 0 2-2 2 3 3 1 12-5 4-2-1-3 4-3 1-2 2 2 3 3 0 1 4-1 4 1 5-2 1-3 0-3 0-2 2 0 1 3 3 2 0 0 2 2 1 2 2 0 2-2 2 2 2 0 2-5 4-4-1-1 1 1 5-1 5-2 2 0 5 2 8 9 19 0 2-1 1-1 0-2-2-1-4-14-24-6-4-3-1-1-2 0-8 4-4 0-2-2-6-2 0-4 2-1 3-2 2-2-3 0-7-4-2 1-3 2-2 0-2-1-2 0-4 5-3-1-1-3-3 0-5 3-3 3 0 3 4 4 0 1 5 2-3 3-3-5-5-2 0-2-2 0-2 2-3-3-1-2 1-1-1 1-3 3-2 2 0 2 3 1 0 3-3 5 0 4-3 2 2 2 0 1-1-1-1-3 0-2-2 4-5-5 0-1 1 0 1-4 3-2-1 0-1 3-2-2-2-3 3-7 0-2 2-6 0-1 1-1 0 0-5-4-4 0-5 1-4 1-2 2 0 4-2 10 1 6-2 1-1-1-9-1-3 0-2 3-3 2 0 3 2 2 1 1 1 1 5 1-2 5-9 3-9-19-11-7-8-6-6-8-15-2 3-1 2-7 0-10 8-9 5-3 0-4-4-8 0-11 6-4-1-2-3-3 2 0 7-2 3-15 9-19 17-6 2-6 2-20 1-10-3-8-4-9-10-3-6-13 1-2-1 2-16 3-11 4-7 4-4-3-1-2-2-5-22-4 6-12 9-14 15-15 8-3-1-8-6-5-17-4-7 1-6-2-1-7 7-4 13-7 9-2 3-3 0-3-2 0 3 2 3 3-1 8-7 5-10 2-1 2-1 8 8 1 8-2 1 0 2 1 1 5 2 2-1 3 0 17 9 5 4 0 2-4 12-8 18 1 15 1 4 9 4 2 2-2 12-2 3-14 2-14 0-13 7-8 5-6 14-2 2-2-1-1-1-1-7-1-2-12 0-6 3-4 1-2-2-5-11-18-16-5 9-1 7-2 3-11 2-8-1-2 1-5 7-2 7-2 2 4 2 7-1 1 1 1 11-2 8-2 3-2 1-10-1-3 1-12 6-12 10-2 6-4 3-10 0-3 4-1 3-5 3-9 0-16 5-8 7-2 4-20-2-19 0-28 14-4 0-2 3-20 9-2 3-3 8-3 4 3 3 0 4-1 3-4 2-2 2-3 5-1 4 5-8 10-7 13-12 9-3 15-3 13-6 10-1 4 0 3 4 1-6 2-1 3 0 10 5 14 0 25-11 4-4 1-3 2-2 2 0 3 2 1 0 13-6 9-4 2-3 2-1 2 1 4 3 5 0 6-1 10-9 2-8 3-3 1 0 3 3 9 2 3 0 11-4 5-7 13-6 2 2 7 11 0 12-2 5 5 0 1-2 0-5 2-7 8-7 8-1 17-5 30-6 10 1 6-4 5 0 8 1 2 1 1 3 1 3-1 2-7 5-6 7-5 1-2 2 0 4 5 5 14 2 8 4 4 0 14-4 19-4 4 0 1 2 0 2-5 11-7 8-6 3-19 3-5 2-3 0-10 2-7 5-2 0-3 1-11 9-2 3-31 11-6 5-7 9 3 0 12-3 20-10 35-13 31 1 18-4 8-9-1-2-3-2-3-3-1-3 2-3 6-2 6-2 22-1 4-1 17 2 5 6 4 6 0 2-23 24-8 10-5 5-10 6-7 3-4 0-4-1-18 12-2 3 1 3 2 0 6-2 3 0 10 4 0 5-3 4 4-4 3-6 4-3 22-3 3-4 4-7 2-3 12-6 9-2 16 1 6 2 6 1 4 2 1-5 2-2 13-8 3 0 10 5 0-3-2-5 0-3 2-2 13-10 9 0 9 2 3 0 3-2-2-2 0-8 1-1 9 0 1 1 1 5 6 0 2 2 2 0 13-14-1-4-4-9 1-3 3 1 2 6 4 4 11-3 3 1 2 3 1 6 1 3 4-1 2-2 1-6 3-3 8 1 14 3 23 1 14 7 7-1 18-7 4 3 4 6 1 16-5 13-7 35-8 25-2 2-16 8-7 7 0 1 38 1 2 2 0 2 2 0 3-3 17-22 16-13 5-14 5-20 1-26-5-19 0-26-5-10-2-2-17 0-4-2 3-15 3-26-14-37-3-41 22-56 5-27 2-40 3-66 6-13 12-29 10-19 20-27 2 5 2 2 2-2 4-14 0-3 3 3 7-3 3-2 5-10 4-17 5-15 1-9zM1266 746l1 3-2 2-1-3zM649 730l3-1 8 1-3 1-5 0zM1149 720l0 1-5 1-1-1 4-2zM1075 703l2 2 3 5-2 1-4-5zM1071 705l-1 4-4 5-2 4-2 1-3 1-9 0-28 6-2-3-3-7 1-3 5-8 15-6 6-1 10-1 4-1 4 0 7 6zM1014 686l0 11-2 2-16 1-8 4-3 0-2-2-3-7 0-5 3-7 3-2 7-2 9-1 6 3zM839 667l5-1 5 2-1 2-4-1-3 1zM1063 656l1 0 1 2 0 2-2 0-1-1 0-2zM980 649l4 3 7 10-2 14-4 4-9 4-5 1-10-5-3-12 0-4 6-10 2-2zM1011 644l2 1 4 5 1 2-1 6-3 4-7 2-2 0-2-1-3-7 0-8 1-2 2-1zM963 622l1 6-1 4-13 12-4 2-12-1-3-3-3-6 0-2 2-2 13-4 9-6 5-2 4 0z"/>
<path fill="#eac003" d="M917 842l-12 8-10 1-13-1-8 3-4 0-8 7 0 2 2 2 1 0 11-10 4-1 11 1 11 0 2-2 3-1 8-6zM486 811l1 2 3 0 4-1 4-4-4-2-6 0-2 1zM1084 764l1 4 5 0 0-5zM743 556l1 1 4 1 2 2 8-1 2-1 1-8-11 2-4-2zM800 540l1 3 2 0 3-2zM784 520l-4 10 7-2 3 1 0-2-2-3-3-4zM1203 238l3 2 4 0 5-2 6 0 1-1-12-7-2 0-2 3zM1361 214l-2-2-115 0 0 3-1 3 0 28-1 5 0 11 1 2 6 3 2 3 5 8 1 4-1 11-7 12-3 10 0 20-4 13-6 8-7 9-11 6-12 5-9 8-2 1 1 2 0 3-9 19-2 7-2 4-4 1-1 1 1 8-2 12-3 3-4 1-1 1 0 13-1 2-1 11-4 19 0 9 1 7 0 18-2 2-17 3-5 5-3 0 0 6-8 10-1 3-2 4-1 4-11 9-3 6-1 10 7 4 0 3 2 4 0 4 2 11-3 6-1 7-2 2 1 11-3 2 1 1-1 7-1 2 0 3 2 3 0 4-2 11-1 12 0 1-4 4 0 3-3 3-1 2-3 3-1 3-3 3 0 8 10 19-1 3-1 0-3-1-8-17-5-6-6 0-5-4-1 1-4 0-2 1-3 3-2 4-2 2-3 1-9-1-30 6-4-8 0-4 5-10 22-8 10 0 6-3 2-2 0-2-2-3 0-5-2-3 0-6-3-4-1-5 0-6-1-2 4-12 4-4-3-4 0-5-2-7 1-3 0-31 7-21 2-2 7 1 2 2 2 4 1 0 1-3 2 0 1 3-2 1-1 4 2 1 3-1 4 0 3 1 6 0 2-1 3 0 1-1 0-1-10-6-2 0-2 2-2-1 0-2-3-3-5-10-8-7-6-12-5 4-4-1-11 8-9 6-3-1-4-4-7 1-13 6-2-1-3-3-1 0-2 2 0 8-2 2-13 7-22 19-9 4-22 1-6-1-12-6-9-10-3-6-13 1-2-3 2-17 3-9 3-7 3-3-4-4-2-15-2-5-2 1-3 4-11 9-14 15-13 7-4 0-9-6-2-5-3-13-5-7 1-6-2 0-5 5-4 10-1 4-7 11 1 0 3-3 6-11 2-1 2 0 3 1 5 7 1 9-1 0-1 1 2 3 3 1 3 0-1-1 2-1 6 2 18 11 0 3-6 18-5 12 1 18 1 1 7 3 3 3-1 11-3 4-11 2-16 0-14 7-8 4-6 16-1 1-2 0-2-3-1-7-2-1-12 1-7 3-3 0-6-12-18-16-5 8-1 8-3 3-12 2-7-1-1 0-4 7-2 6-2 3 4 2 6-1 2 2 0 11-2 7-2 3-3 1-11-1-13 7-10 8-2 2-2 6-3 3-3 1-7-1-3 4-2 4-4 2-9 0-11 4-5 1-8 6-2 3-2 2-18-2-20 0-27 14-4 0-4 4-12 5-8 4-3 7-4 7 4 4-1 4-6 6 1 0 8-6 13-12 11-3 14-3 13-7 13 0 4 3 1-5 1-1 3 0 12 5 14 0 9-4 15-7 3-3 2-5 2-1 2-1 3 2 2 0 10-4 10-5 3-3 2-1 2 0 3 4 10-1 12-9 2-9 2-2 2 0 3 3 12 2 10-4 6-7 12-6 2 0 8 14 1 11-2 4 3 1 2-2 0-4 2-8 7-7 11-1 18-6 26-5 6 0 4 1 7-4 4 0 8 1 2 1 2 2 1 5-7 5-8 9-5 1-1 4 4 5 2 1 12 2 11 4 2 0 15-5 22-3 1 1 1 3-3 8-2 3-10 10-23 4-6 3-11 1-7 5-5 1-11 8-2 2 0 2 1 0-16 7-3 0-5 3-8 2-6 5-3 4 0 2 10-3 4-3 5-1 9-5 15-6 21-7 30 2 6-2 8-1 5-2 8-8 0-1-4-3-3-3-1-2 0-2 2-3 6-4 16 0 16-2 16 2 3 1 5 6 4 5 0 4-25 25-4 6-7 7-9 5-10 5-7-1-18 11-1 2 0 3 3 0 5-2 4 0 8 4 1 1 0 3-1 4 3-3 3-6 3-3 21-2 4-4 4-8 1-2 12-6 10-2 15 0 8 3 9 1 1-4 2-2 13-7 3 0 9 4 1-2-2-5 0-3 3-4 11-8 11 0 9 2 2-1 2-1-2-2 0-8 2-2 8 0 2 2 0 3 1 2 6 0 4 1 12-13 0-4-4-8 0-3 1-1 2 0 1 1 4 7 2 2 10-2 4 0 2 3 1 5 1 4 4-1 1-1 2-8 4-2 6 1 16 4 17 0 3 1 3 0 14 7 13-4 10-4 2 0 3 2 4 7 2 11 0 6-5 11-4 20-3 12 0 3-6 17 0 3-2 6-2 2-17 9-6 6 0 1 37 0 2 2 1 3 1 0 3-3 17-22 16-13 5-14 5-20 1-26-5-19 0-26-5-10-2-2-17 0-4-2 3-15 3-26-14-37-3-41 22-56 5-27 2-40 3-66 6-13 12-29 10-19 20-27 2 5 2 2 2-2 4-14 0-3 3 3 7-3 3-2 5-10 4-17 5-15 1-9zM906 755l-3 2-3 0-2-1 6-1zM1266 746l1 3-2 2-1-3zM649 730l3-1 8 1-3 1-5 0zM1149 720l0 1-5 1-1-1 4-2zM839 667l5-1 5 2-1 2-4-1-3 1zM963 654l3-3 3-1 9-2 5 1 9 12-1 12-2 6 9-2 3 0 12 7 2 3 0 10-1 1-3 2-15 1-8 3-4 0-2-2-3-8 0-4 3-6 0-2-7 3-3 1-9-4-4-5-1-4-1-9zM1011 644l3 1 4 5 0 3-1 5-3 4-6 3-4 0-2-3-3-6 0-8 4-4zM963 621l1 6 0 5-4 4-12 10-2 1-9-1-4-1-2-2-4-7 0-2 2-2 2-2 12-3 7-5 3-1 8-1z"/>
<path fill="#e0cc00" d="M917 843l-13 7-2 0-6 1-18 0-9 3-6 6 0 2 1 1 2-1 4-3 3-4 7-2 21 0 1-1 4-1 7-5zM486 808l2 5 5-1 3-3 0-1-4-1-3 0zM837 784l-2 0-2 1 2 1zM1085 763l-1 1 0 3 1 1 4 0 1-1 0-3-1-1zM922 741l-1-1-10 10-2 1-23 5-2 1-2 3-10 1-4 5-8-2-14 10-1 2 3 0 7-5 1 0-5 7 17-5 9-1 9 3 14 0 4-1 5-1 5 0 3-1 5-4 2-5-9-6-1 0-3 1-6 6-4 1-2 3-3 0-7-8-3-1 1-1 23-5zM863 768l-7 3-1 0 5-4zM744 555l0 1 4 1 2 2 8 0 1-2 1-5-4-1-3 1-4 0-2-1zM785 521l-1 1-2 4-1 3 8-2-1-2zM824 510l-4 5-4 10 3-2 3 0 7 7 2 5 0 6-1 1-1-1 0 2 1 2 5 1 0-1-1-1 0-1 4 0-3-3-2-3-4-14-4-8zM1207 237l2 1 3 0 4-1 0-1-2-2-5-2zM1361 214l-2-2-114 0 0 3-1 2-1 7 1 21-1 3-1 14 9 6 7 13-1 13-8 12-3 13 0 17-4 14-12 15-14 8-9 3-10 9 0 7-3 4 0 3-5 9-4 10-3 4-3 1 0 10-1 9-2 3-3 2-2 0-2 2-1 26-5 18 2 21 0 12-2 2-3 2-14 2-2 1-4 4-2 0 0 6-3 4-4 6-2 13-3 3-8 4-5 4 0 3 2 3 0 3 3 2 3 2-1 5 2 1-1 9 1 3 1 2 0 6-1 1-2 4 0 6-2 3 0 8-2 1 2 1 0 2-2 3 0 9 1 2 0 10-2 3 0 16-2 5-9 12 0 4-5 4-2 3 0 2 2 5 7 13 0 3-2 1-3-1-9-17-3-4-2 0-2 2-3 0-9-3-3 0-8 7-10-1-28 5-4 2-3-5-2-5 0-3 4-6 1-3 1-2 9-2 13-7 10 0 3-4 0-8-2-4-1-4-2-3-1-3-3-2 1-3 0-5 4-7 0-6 1-2-1-5 1-4 0-12 2-4 0-6 0-24 1-5 0-5 1-2 0-6 6-6 5-3 3-1 3 1 4 0 1-1-2-4-6-6-5-10-1-1-4 3-5 0-11 8-9 5-3-1-4-4-7 1-6 2-6 3-3 0-4-3-1 1 0 7-3 3-14 8-14 12-5 6-4 3-3 1-6 1-22 1-17-7-8-9-4-7-12 0-3-3 3-16 2-10 6-10 0-1-2-1-1-3-2-10-1-6-2-2-4 5-10 8-14 15-15 8 1 2 11 6 3 4-6 19-6 13 1 16 5 4 5 2 2 3-2 11-3 3-13 3-15 0-12 6-9 5-6 15-2 1-2 0-1-2-1-7-1-1-12 0-10 3-2-2-6-11-11-10-6-4-4 7-2 7-2 4-11 2-9-1-3 4-2 4-2 5-2 3 3 1 7-1 2 2 0 10-2 10-2 2-2 1-11-1-13 7-10 8-3 3-2 6-3 2-11 1-2 3-1 4-2 1-4 2-9 0-14 4-8 5-4 6-2 1-3-1-15-2-19 1-28 14-3 0-3 3-21 9-2 6-4 7 0 1 3 3 0 1-1 5 3-1 13-12 13-4 11-2 14-7 12-1 2 1 3 2 1-4 1-2 2 0 12 5 14 1 11-4 14-7 4-4 2-6 4 0 2 2 4-1 18-8 3-4 2-1 2 0 4 5 10-1 10-9 3-10 2-2 2 0 4 4 8 2 3 0 11-5 4-6 14-6 2 1 7 12 1 7 0 5-1 3 2 1 1-2 0-3 2-8 8-7 10-1 18-6 28-5 10 1 6-4 6 0 8 1 2 2 1 5-2 3-4 3-9 9-5 2 0 3 4 5 13 2 7 3 6 1 13-4 23-4 1 1 2 3-1 3 0 5 6 6 6 2 10 0 11-1 11 0 10 3 5 5 4 7-1 3-24 24-3 5-9 10-16 9-10 0-17 11-1 2 0 1 2 0 5-2 3 0 9 4 2 1-1 2 0 4 2-2 3-7 3-1 12-2 3-1 6 0 3-3 4-8 2-3 12-6 13-3 6 1 8 0 8 3 3 0 3 1 1-1 0-2 3-3 12-7 3 0 9 4 1-2-2-5 0-3 9-8 6-4 10 0 10 2 2-1 0-10 2-2 9 0 1 1 1 5 8 1 2-1 11-12 0-4-4-7 1-5 3 1 2 1 1 4 3 4 2 0 4-2 9 0 3 3 0 5 2 4 2 0 1-1 2-8 2-2 3-1 6 0 3 2 14 3 16 0 3 1 3 0 14 6 3 0 11-3 8-4 3 0 4 2 4 7 2 18-5 11 0 4-2 5-1 9-4 14-1 5-8 26-9 5-9 4-5 6 36 1 2 2 0 3 1 0 3-3 17-22 16-13 5-14 5-20 1-26-5-19 0-26-5-10-2-2-17 0-4-2 3-15 3-26-14-37-3-41 22-56 5-27 2-40 3-66 6-13 12-29 10-19 20-27 2 5 2 2 2-2 4-14 0-3 3 3 7-3 3-2 5-10 4-17 5-15 1-9zM1266 746l1 3-2 2-1-3zM649 730l3-1 8 1-3 1-5 0zM1149 720l0 1-5 1-1-1 4-2zM839 667l5-1 5 2-1 2-4-1-3 1zM962 653l4-3 2-1 11-2 4 1 10 13-1 15 10 0 11 6 3 4 0 12-4 3-5 1-5-1-6 1-9 4-4-1-2-3-3-7-1-4 2-4 0-2-7 2-8-3-4-4-3-5-2-11zM1010 643l5 2 3 3 1 2-1 7-1 4-2 2-6 2-4 1-3-2-2-4-2-5 0-6 1-3 3-2zM963 621l2 8 0 2-1 2-7 8-9 6-8 1-7-2-2-2-3-4-2-6 1-2 3-2 12-3 7-5 3-2 9-1z"/>
<path fill="#d1d300" d="M916 843l-12 7-6 0-4 1-14-1-9 4-7 7 2 0 3-3 2-2 3-1 7-3 14 1 11-2zM488 811l5 0 1-2 0-1-5 0-1 0zM1085 764l0 4 5 0 0-4zM922 764l-4-3-4 0-3 3-4 5 0 1 5 2 4-1 5-4zM922 741l-12 10-25 5-2 3-3 6-3 3-2 0-15-4-12 9-3 2 0 1 1 1 14-10 17 4 2 0 6-11 2-2 22-4 2-1zM759 553l-4-1-3 2-5-1-1 1 0 1 3 2 2 1 7 0 1-2zM829 541l1 3 3 2 2 0-1-2zM832 536l0 5 2 1 0-1zM785 523l-3 4 1 1 4-1 0-2zM823 513l-3 3-2 6 5 1 6 6 0-5-4-7-1-3zM1361 214l-2-2-113 0-2 12 0 7 2 11-2 9 0 2-1 4 0 5 3 2 5 2 1 1 6 12 0 15-2 4-6 8-2 9-1 20-1 4-4 11-12 15-13 9-4 1-6 3-9 8 0 5-2 5-1 4-5 8-4 12-3 3-3 1 1 7-3 13-2 3-4 1-2 1 0 12-1 3 1 9-6 19 0 7 2 8 0 19-3 3-2 1-15 3-5 6 1 4-4 4-1 4-3 4 0 5-2 3 0 4-2 3-12 9 1 5 3 4 2 4-1 15 2 4 0 2-3 8 0 5-2 7 0 20-1 2 1 1 0 2-1 4 0 4-2 4 1 4-1 2 0 3 1 3 0 4-3 6-4 6-1 6-2 4-5 6-4 2 0 3 7 14 0 3-1 1-3 0-2-2-8-15-3-2-6 3-2 2-3 0-5-4-5 0-4 3-11-2-30 6-4 1-7-9 0-2 4-7 1-4 4-5 8 0 6-3 2-3 4-3 3-2 4 1 2-2 0-4-1-5-2-1-3-1-1-1-1-4-1-1-3 3-1 0-1-2 0-2 2-2 3 0 0-2-1-2 0-2 5-2 3-8 0-7 2-2 0-2-2-4 0-3 2-6 4-16-1-22 1-3 0-13-1-3 3-5 1-4 5-4 6-2 6 0-1-1-3-3-5-10-4 2-4-1-8 5-4 3-9 5-4-1-3-3-2-1-9 2-8 4-3 0-3-1-1 5-3 4-14 7-12 10-9 10-4 3-7 1-9 0-7 2-6 0-7-3-12-6-8-8-4-6-10-1-4-2 0-3 3-20 1-1 1-4 5-9 0-2-2-2-3-15-2-4-4 4-11 9-15 16-11 6 1 2 10 6 2 3-6 20-5 12 1 18 4 2 4 2 3 3-2 12-2 3-12 3-17 0-20 10-7 16-1 1-3 0-1-1-1-8-2-1-12 0-7 3-3 0-1-1-6-12-11-9-6-4-4 6-2 8-2 3-12 2-8 0-1 1-3 4-4 10 3 1 5-1 3 2 0 1 0 13-2 7-2 2-15 0-12 7-11 9-3 7-3 3-10 0-6 9-4 1-7 0-17 4-8 7-1 3-2 2-19-2-18 0-4 1-25 13-5 1-1 2-22 10-2 6-4 6 0 1 3 3 0 5 5-3 11-10 9-3 16-3 12-6 14-1 2 2 1 0 1-4 3-1 14 5 13 0 10-4 13-6 5-5 1-3 2-3 3 1 1 1 3 1 20-10 3-3 2-2 1 0 5 5 9 0 11-9 3-10 2-2 2 0 3 3 11 3 11-5 6-6 12-6 2 0 3 3 6 11 1 10 3-9 8-6 9-1 20-6 23-5 9 0 4 1 7-4 4-1 11 2 2 3 0 5-1 2-7 5-6 7-5 3 0 2 3 4 3 1 8 1 9 4 6 1 14-4 20-4 3 0 3 4 0 6 8 8 8 1 24-2 15 5 3 4 3 5 1 4-1 3-7 6-13 14-4 3-5 8-8 8-17 9-8 0-3 2-7 3-7 5 0 2 8-2 11 4 1 1-2 3 0 4 2-2 4-9 7-1 7-1 3-1 6 0 3-3 4-8 3-3 9-5 13-4 3 0 6 1 6 0 10 3 5 0 1-2 2-2 13-8 5 0 6 3 0-1-1-4 1-4 7-7 8-6 10 0 4 2 7 0 1-2 0-7 2-2 9 0 2 1 0 3 9 1 4-8 2-1 3-1 2-2-1-5-2-5 0-4 1-1 4 1 4 6 1 1 5-2 11 1 2 2 2 9 1 1 2-1 0-8 3-2 2-1 4 0 2-1 2 0 6 3 4 1 6 2 4 0 4-1 6 0 9 1 8 5 6 1 12-2 10-5 4 1 4 2 4 8 2 19-1 5-3 5 0 5-2 4-7 29-4 10-1 9-3 6-1 2-4 1-7 5-6 3-2 1 0 1 10 1 13 0 3 1 5 0 3 2 1 4 3-3 17-22 16-13 5-14 5-20 1-26-5-19 0-26-5-10-2-2-17 0-4-2 3-15 3-26-14-37-3-41 22-56 5-27 2-40 3-66 6-13 12-29 10-19 20-27 2 5 2 2 2-2 4-14 0-3 3 3 7-3 3-2 5-10 4-17 5-15 1-9zM1266 746l1 3-2 2-1-3zM1032 731l-1 1-4-1 3-1zM649 730l3-1 8 1-3 1-5 0zM1040 729l-3 3-2 0-2-2 6-1zM1149 720l0 1-5 1-1-1 4-2zM839 667l5-1 5 2-1 2-4-1-3 1zM964 648l14-3 5 1 6 5 5 10 2 12 2 1 4 0 12 7 2 2 3 12-1 3-6 5-7 1-2-1-6 0-10 4-2 0-4-2-2-1-4-8 1-8-6 0-10-5-6-8 0-5-1-2-3-2 4-5 4-5zM1001 643l10-1 4 3 4 3 1 2 0 5-1 4-2 3-4 4-9 1-4-3-2-7 0-10zM964 621l1 5 1 3 0 3-6 10-4 2-3 2-6 3-8 1-7-3-4-5-3-7 0-2 4-5 5 0 4-2 4-1 4-3 6-3 9 0z"/>
<path fill="#bdd800" d="M915 844l-10 6-7 0-3 1-15-1-9 4-1 2 2 0 8-4 14 1 12-2zM917 765l-3 0-1 1 0 2 3 0 1-2zM1085 764l0 4 5 0 0-4zM921 741l-10 10-2 1-24 5-6 10-2 2-14-4-4 0-14 10 0 1 2 0 13-9 3 0 13 4 2 0 2-2 3-6 3-5 22-4 2-1zM961 689l0 1 2 1 5 0 0-1-3-2zM1030 686l-4 4-2 0 0 5 3 2 4-1 2-1 1-2-3-3zM1021 685l0 3 2 1-1-3zM949 681l0 3 2 2 1-2 0-1-1-2zM949 655l-1 1 0 1 2 1 0-2zM757 554l-1 0-3 2 4 0zM829 542l0 1 2 2 3 1 1-1-5-3zM821 516l-1 5 4 2 3 2 0-2-1-3-4-4zM1361 214l-2-2-112 0 0 4-1 2 0 5-1 3 0 5 2 8 0 4-2 5 0 7-2 4 0 1 2 2 7 2 2 3 2 6 3 6 1 11-2 6-6 9-3 8-1 7 0 15-1 6-3 8-12 15-7 6-7 4-5 2-3 4-1-1-2 1-6 7-2 7 0 1-1 1 0 5-2 5-2 0-1 2-1 0-1 4-2 3-1 5-2 3-3 4-1 8-2 5 0 6-3 3-4 0-2 1 0 13 2 5 0 5-1 1 1 5-4 4-2 4 0 4 3 6 0 3-2 3-1 23-3 4-3 2-8 1-6 3 0 3-2 2 0 3-3 4 0 3-6 7 0 5-1 2-1 5-8 7 1 1-2 1-1 3 2 3-1 4 2 5-1 4 0 9 3 7 0 2-4 4-2 5-2 11 1 7-1 5-1 0 0 4 1 0 1 4 0 5-3 9 0 8 2 6 1 9-2 2-3 1-2 2 3 3 0 2-3 2 1 5 4 5 3 0 0 2-3 2-3-1-5 1-1 2 4 1 0 1-7 8-1-1 1-5-1-1-4 0 0 2 4 7-1 3-1 1-3 0-2-2-6-10-2-2-2-1-3 1-3 4-2 0-5-3-5 0-2-3-2 0-2 2-9-2-6 0-25 4-12 4-3-1-2-3-3 3-5 0-3 2-3 1-5-3-1-4-6-8 2-2 4 0 1-1-4-3-5 1-1 2-13-13-15-11-1 1 0 2 7 6-2 0-2-1-4-4-1-4-1-1-2 0-3-4 0-3 4-2 0-1-3-4-3-3-1-4-8 0-2-2-1-1 0-6 2-2 0-4-3-2-1-4-2-3 0-4-1-4 0-5 1-3 3-3 6 2 3-2 3-1 8-4 9-1 4 0 3 2 2 7 2 4 0 2-2 2 0 8 1 0 11-1 7-1 3-2 2 0 3 4-3 3 0 1 2 2 2 4 1 1 2-3 0-6 2-4 3-1 2 1 6 0 5 2 4 3 2 4 3 2 1 3 3 1 1 3 4-3 8 0 1-1 3-6-2-8 1-5 5-9 3-14-1-7 2-27-1-4-2-6 3-3 0-7 5-5-1-3 2-2-1-1-2-1-7 5-5 4-1 3 2 2 3 0 3 2-1 2-1 1-6-2-8-5-4-2-3-3-11 1-6 3-5 1-5 6-14 7-14 12-11 12-5 0-3 1-7 0-10 2-4 0-8-3-13-6-12-12-9-3-4-2-1-4 2-9 1-9 2-4 0-4 5-8 0-2-2-4-3-14-1-2-1 0-3 4-9 7-16 18-9 6 8 6 3 4-1 4-3 8-2 8-3 6-2 7 1 16 4 3 4 2 2 3-1 13-3 3-12 2-15 0-5 2-16 8-3 4-4 12-2 2-3 0-2-3-1-8-12 0-9 4-2-1-2-1-5-11-10-9-6-4-3 2-2 4-2 8-2 2-13 3-7-1-4 5-3 7 0 3 3 1 5-1 2 2 1 4-1 9-2 8-2 3-12-1-2 0-11 6-13 10-3 8-2 2-11 0-2 3-2 5-2 2-4 1-8-1-16 5-8 6-1 3-3 2-17-2-20 0-29 15-3 0-2 2-19 8-3 3-2 6-3 5 3 4 0 4 1 0 14-12 9-3 15-3 13-7 13 0 3 2 1-4 1-1 4 0 12 5 14 0 11-4 12-6 4-5 2-5 1-1 3 0 3 2 5-1 17-8 1-2 3-3 2 0 5 5 9-1 11-8 2-10 3-3 2 0 4 4 8 2 3 0 10-4 6-7 11-5 3-1 2 2 6 11 2 7 1 1 2-5 9-7 9-1 20-6 26-5 10 1 6-4 4 0 11 2 2 2 1 6-2 2-7 5-4 5-6 5 0 2 2 2 2 2 4 0 8 2 5 3 7 1 9-2 5-2 23-3 3 2 1 6 6 3 3 4 4 2 11 0 2-1 5 0 2-2 9 5 16 4 4 5 1 9-10 8-3 5-15 14-6 9-6 6-18 9-5 3-7 1-5 2 0 1 7 1 4 2 2 0 1-1 0 1-3 6 1 3 4-9 3-2 8-2 5 0 3-2 4 1 3-3 4-8 3-4 10-5 5-1 5-5 4 0 6 3 9 0 3 1 3 0 6 2 5-4 11-7 5-1 5 2 1-4 1-3 5-5 0-2 6-5 5-2 6 0 4-2 1 0 3 3 7-2 0-5 3-2 11 1-1-2 0-5 1-1 11-4 5-4 1-2 0-4 2-1 1 1 3 0 2 2 5 0 3 1 3 0 2-1 4 2 4 0 2 3 3-4 1-4 3-2 4-4 1 1 1 4 2 0 0-3-2-3 2-4-1-6 5-5 3 0 4 2-2 5 0 3 2 2 4 0 2 2 0 5-2 3-2 0-3-2-2 3-1 4 2 4 7 3 4-1 3-2 4 0 2-2 3 0 3 2 1-1 1-4-2-4-3-2 0-3 2-4 4 0 3 1 2 2 1 3-3 7 2 6 3 2 0 3 1 1 5 0 2-3 3 1 4 0 2-2 3 0 3-1 3-3 4 0 5 3 8 9 1 4-1 2 0 4 2 18-3 4 0 4-2 3 0 6-3 3 0 3-2 5 0 8-3 4-1 4-3 8-1 10 2 2 0 3-4 5-2-1-5 0-6 6 0 1 13 0 4 2 4 1 3 2 1 5 3-3 17-22 16-13 5-14 5-20 1-26-5-19 0-26-5-10-2-2-17 0-4-2 3-15 3-26-14-37-3-41 22-56 5-27 2-40 3-66 6-13 12-29 10-19 20-27 2 5 2 2 2-2 4-14 0-3 3 3 7-3 3-2 5-10 4-17 5-15 1-9zM1056 761l2-1 1 2-2 1zM1266 746l1 3-2 2-1-3zM1044 744l2-1 1 1 1 2-1 1-1 0-2-1zM1052 741l2 1 0 1-1 2-2 0-1-1 0-1zM1226 738l2 0 2 2 0 3-1 2-2-1-2-2 0-3zM1234 733l2-1 1 2-1 1-1 0-1-1zM649 730l3-1 8 1-3 1-5 0zM1057 729l1-2 6 1 1 1 3-1 8 2 2 1 1 1-5 0-2 3-1-1-6 1-2-2 0-2-5-1zM1056 727l0 2-1 1-7 2-2 2 2 3 0 1-2 1-5 0-2 1-2 0-7-3-7 0-5-3 1-1 8-2 25-5zM1149 720l0 1-5 1-1-1 4-2zM980 719l2 2 4 6-2 3-3 0-2-4 0-4zM1137 710l-8 4-1 0 1-3 3-3 4 1zM961 700l7 5 10 11-2 0-3-1-2-2-2-5-4 0-2-2-2-4zM839 667l5-1 5 2-1 2-4-1-3 1zM1028 652l2 1-1 2-1 0z"/>
<path fill="#a0d800" d="M914 845l-9 5-6 0-4 1-14-1-11 4 0 1 2 1 8-4 14 1 11-2zM1085 764l0 4 5-1-1-3zM911 751l-26 6-3 4-2 5-3 3-4-1-11-3-2 0-12 8-2 2 0 1 2-1 12-8 3 0 13 4 2 0 3-4 3-6 3-3 22-5zM1217 739l-1 3 0 3 5 0 0-4-2-2zM1182 738l-4 0 0 3 2 0 2-1zM1126 729l-1 1 0 3 1 1 3 0 1-1 0-3-1-1zM1204 728l0 2 2 1 0-3zM951 690l0 1 3 3 13 10 12 12 7 10 2 3 2 0 0-3-8-11-14-14-14-11zM829 542l1 2 2 1 3 0-6-4zM1361 214l-2-2-110 0-2 21 2 7 0 4-2 5 0 7-1 3 8 4 4 6 0 5 3 5 1 11-3 8-6 7-2 6 0 7-1 3 0 13-1 2-1 5-3 8-12 16-7 6-8 5-2 1-2 1-2 0-2 3-3 5-7 9 0 5-2 7-5 4 0 2-3 3 0 5-2 6-3 4 0 5-2 4 0 4-1 4-5 5-4 0 0 10 5 9 0 4-6 7-2 5 1 4 5 7-3 4 0 3-3 5 0 4-1 3 1 5-1 5-2 3-10 3-6 4 0 2 2 3-1 2-3 0-4 8-3 3-2 5 0 3-2 3-1 6-1 1-3 0-4 6 0 15-1 6 0 3 2 3 1 3 1 1 2 1 2 1 0 1-9 9-3 5 0 13-1 4 0 5 2 3 0 2-1 2 1 5-2 3-2 5 0 8 3 6 2 2 0 6 8 7 3 4 7 0 2 2-28 16-12 13 0 3-1 1-2 0-7-4 1-1 0-1-2-3-3 3-10-5-6-3-19-3-5 0-28 5-29 9-2 0-20-7-5-2 2-2 0-2-3-6-6-6-5-7-2-1-6-7-2-4-3-3-4-5-1-5-3-3-3-5-4-3-3-4-2-11 1-7-3-17 0-5 1 0 11 1 14-6 9-1 6 1 3 3 1 4 1 2 7 8 3 0 2 1 9 0 5 2 6 0 2 1 4 0 3 1 5 1 5 3 15 4 1 0 2-4 4-4 3-6 2-2 2-5 3-8 1-7-1-23 1-3 0-11-5-6-6-1-5-4-6-2-4-1-3-2-3 0-3 1-7 1-8 5-13 6-12 10-5 5-8 10-2-1-5 0-6 3-4 0-9 2-5 0-21-11-11-8-2 1-2 1-2 0-1-1 1-4 0-1-8-5 0-4 2-9 0-8 2-6 0-2 5-10-2-4-2-15-1-1-7 6-16 15-4 7-6 6 1 3 4 4 1 2 0 4-2 4-2 6-1 6-3 7-2 8 1 7 0 8 2 2 5 3 3 3-2 13-2 3-4 1-5 0-5 2-15 0-10 4-11 7-7 15-1 1-3 0-2-2-1-7-2-2-11 1-7 3-3 0-2-2-6-11-10-9-4-3-2 0-3 6-3 8-2 2-13 2-7 0-3 4-4 8 0 2 4 0 4-1 3 3 0 12-3 11-3 3-4-2-8-1-13 7-9 7-3 3-2 6-2 3-12 1-3 4-1 3-2 3-12 0-16 4-7 5-2 4-3 3-19-3-18 1-29 14-3 0-2 3-21 9-2 7-3 4 0 2 2 3 0 3 1 0 14-12 10-3 12-2 14-7 13-1 4 2 2-4 4-1 12 5 15 0 9-3 14-7 3-4 1-5 2-2 3 0 3 3 4-1 17-8 2-4 3-2 3 1 4 4 9 0 10-8 3-11 3-4 6 6 10 2 11-4 5-7 12-6 3 0 2 2 6 9 3 8 1-3 8-6 2-1 12-2 16-5 28-5 9 1 5-4 4-1 12 2 2 2 1 4-1 4-8 6-7 10 0 3 2 2 3 0 17 6 5 0 7-1 5-2 23-4 3 2 3 5 5 3 10 0 4-2 19 11 21 6 14 5-2 2-4 1 0 2-3 4 0 4 3 4-2 2-2-3-1-3-3 0-2 3-4 1-2 2-1 4 1 2 3 2-2 1-6 0-8 4-3 3-3 7-17 14-9 4-1 1 1 2-4 3-5 10 1 2 5-10 5-4 5-2 4 0 0-5 4-4 1 4 2 2 1 1 2-2 2-4 4-6 4-3 10-4 2-4 4-4 0-3 4-3 2 0 1 1 3-1 0-1-2-2 10-7 1 0 0 4 4 1 1 2 0 2-2 2-7 2 0 3 1 2 2 2 5 0 3 2 9 0 4-4 3-1 3-4 2 0 4-5 4 1 2 2-1-3 0-4 2-1 3 0 1-1-1-4 0-10 1-1 6 0 15-2 21-2 14-4 4-2 7-5 0-4 1-2 3 1 2 0 8-9 17-10 2 1 1 0 1-3 2 0 0-1 12-7 6 1 4-4 4 3 2 5 3 1 4 5 6-2 6 2 5 0 3 1 3 3 0 2 3 2 0 2-2 2 0 1 2 4 2 1 3 0-2-5 3-6 2-1 3 0 5 2 3 2 2-1 7 0 2 2 2 4 2 2-2 5 0 4 3 4 3 2 2 1 1 7-1 8 1 5-1 3 1 3 0 14-1 1 0 7-1 3 1 6-1 6-5 2-1 7-4 4-4 9 0 3 3 4 0 4-2 4 0 7-1 3 5 3 3 6 18-24 16-13 5-14 5-20 1-26-5-19 0-26-5-10-2-2-17 0-4-2 3-15 3-26-14-37-3-41 22-56 5-27 2-40 3-66 6-13 12-29 10-19 20-27 2 5 2 2 2-2 4-14 0-3 3 3 7-3 3-2 5-10 4-17 5-15 1-9zM1011 758l1 2-4 3-1-2 3-3zM1025 757l3 2 0 4-2 1-2 1-1 1 1 4-1 1-4 2-3 0-3-3 2-4-1-5 6-5zM1008 756l4-2 6 2-4 2-1-1-2 1zM1266 746l1 3-2 2-1-3zM649 730l3-1 8 1-3 1-5 0zM1095 740l-10 4 0-3-2-1-2-3-2 0 0 2 2 0 2 2 0 3-4 0-2-1-2 0-4 1-2 1-19 3-15-1-1-2-5-4-5 0-2 1 5 3 0 1-3 0-10-2-3-3-8-3 21-7 27-5 6 0 21 4 17 9zM839 667l5-1 5 2-1 2-4-1-3 1zM1144 641l1 0 1 1-1 2-1 0-1-1zM1134 636l2-1 4 0 1 2-1 3-4 1-2-2zM1144 591l1-1 2 0 1 1 3 1 0 2-1 2-3 0-3-3z"/>
<path fill="#81d602" d="M913 846l-8 4-5 0-4 1-15-1-10 4-1 1 1 1 9-4 13 1 12-2zM1086 764l-1 1 0 2 1 1 3 0 1-1 0-2-1-1zM910 752l-23 4-2 1-5 9-2 3-4 0-14-4-13 9-1 2 1 0 13-10 4 1 13 4 2-1 5-9 2-3 24-5zM951 690l0 1 2 2 15 12 11 10 8 12 2 2 0-3-6-10-16-16-13-10zM1126 669l-3 2 0 5 2 2 1 3 3 1 2 2 0 2 3 2 1 4 2 0 1 0 1-4 4-2 1-2-3-1-4 3-2 1-4-6-1-6-2-6zM1149 652l-2 1-4 3-2 0-3 2 2 3-1 5 4 2 2 5 7-2 4-7 0-2-3-3zM1129 632l-2 2 1 1 1-1zM1130 628l2 2 4 1 2-2 6-1 1-2-1-2-6-2-2-1 1 6-2 1-3-3-2 1zM1135 597l-1 2 2 0 2 1 2 6 4 4 1 4-1 5 4 3 2-1 2-2-1-4 2-3 1-3-2-2-4 0-5-1-2-6-3-1-2-2zM1152 554l-1 2 2 0 1-2zM829 542l0 1 1 1 5 1zM1361 214l-2-2-109 0 1 6-1 2 0 7-1 4 2 5 1 9-3 4 0 3 3 6 4 3 3 5 1 5 2 5 1 5 2 5 0 8-4 4-3 4-3 4-2 6 0 10 1 3-4 13 0 5-2 6-15 18-4 3-3 3-4 3-4 2-8 8-1 3-4 3-1-1-1 1 1 1 0 4-2 3-1 7-3 4-2 0-1 2-3 5 0 6 2 4-2 2-3 2-1 2-1 11-2 3 0 1 1 2-1 3 0 7-3 2-2-1 1 5 0 7-2 5-4 5 1 7 5 4 1 11-3 3-2 1-5 9 1 9-2 6-2 1-6 0-1 1 0 2 2 3-1 2-1 1-3-2-3 0 0 2 2 2 0 2-2 3 0 2 2 2 1 3 0 7-1 2 0 5-5 5-2 0-2-3-3 0-4 3-5 1-3 4 0 2 4 0 2-2 1 1 0 1-2 1 1 2 2-2 4-1 4 0 6 5 1 2-1 12 2 7 0 10 2 3 0 2-4 6-1 4-3 3 5 8 1 5 3 2 0 2-3 2 0 3 4 1 1 2-2 4-2 2-1 3-6 5-2 5 1 1 2 1 1 3 2 2 4 1 3 4 2 2-11 5-35 19-12 13-1 3-1 2-3 0-2-2-21-11-23-4-31 5-26 7-4 2-22-6-9-6 2-3 0-3-8-9-11-10-3-5-3-4-3-4-2-2-3-6-4-6-3-3-3-6-2-8 1-11-1-4-1-6-1-3 0-8 5 1 8 1 6-2 7-4 2-2 11 0 5 2 2 2 2 5 5 6 3 1 2 0 4 2 5 0 7 2 13 1 13 6 12 2 9-8 4-6 3-8 2-7 0-18-1-2 0-7 2-5 0-7-4-5-6-2-7-5-6-2-14 0-8 2-6 3-10 4-7 5-11 11-7 10-4-2-4 0-7 4-2 0-5 3-9 0-4-2-3-2-4-1-16-9-3 0-4 4-9-8 1-7-5-4-1-2 1-8 1-3 0-8 2-6 0-3 5-9-2-6-2-12-1-1-3 2-8 7-10 11-6 12 0 3 2 6 0 3-3 7-2 12-5 12 1 15 9 9-1 13-3 4-3 1-6 0-3 1-17 0-13 6-2 2-6 3-6 15-4 3-3-3-1-8-1-1-12 0-7 3-4 0-2-3-5-10-10-8-5-3-2 2-3 7-1 4-2 2-14 3-6 0-3 3-4 8 0 2 7-1 3 2 0 2 0 12-2 9-4 8-1-4-3-2-9 0-12 7-10 7-2 3-2 8-2 2-11-1-3 3-2 5-4 4-1-1-9-1-15 4-5 3-4 4-1 4-3 1-18-2-19 0-3 1-25 13-3 1-4 3-7 3-5 2-7 3-6 12 0 1 2 2 1 3 1 0 11-10 3-2 3 0 4-2 15-3 13-6 6 0 3-1 8 1 2-4 4 0 12 5 15 0 9-4 14-7 3-3 2-7 3-3 4 5 5-1 16-8 3-6 5 1 4 5 8 0 11-9 2-8 3-5 0-3 2 0 1 2 4 5 6 2 5 1 9-4 4-5 3-3 12-5 2 0 3 3 6 9 1 4 1 1 10-8 11-2 16-5 28-5 5 0 5 1 8-5 5 0 9 2 3 3 0 6-2 3-4 3-4 4-4 5-1 4 3 2 3 1 12 5 7 1 15-4 21-3 7 6 13 0 1 1 3 0 8 5 14 7 15 4 20 8 5 0 2-1 3 0 4 2-45 32-4 1-4 5-8 5-24 19-3 3-3 8 0 3 4-9 22-19 14-10 5-1 4-5 45-32 27 2 20-3 17-1 15-4 6-4 5-4 0-4 1-1 4 1 8-9 18-10 2 1 0-2 24-13 2-2 1-2 5 5 4 1 3 4 4 1 3 2 5 1 3 2 2 1 2-1 3 0 6 3 8 2 6 3 15 1 5 4-1 3 2 2 0 4-1 3 0 1 4 2 1 5 5 4-1 5 1 5 4 5-5 4 1 3 0 7-1 6 4 3 0 2-3 9 1 8-3 7-2 4-1 3-2 2-4 2-2 4-3 4 0 1 2 2-1 5 2 4 0 3-3 4 0 5 2 9 1 1 18-23 16-13 5-14 5-20 1-26-5-19 0-26-5-10-2-2-17 0-4-2 3-15 3-26-14-37-3-41 22-56 5-27 2-40 3-66 6-13 12-29 10-19 20-27 2 5 2 2 2-2 4-14 0-3 3 3 7-3 3-2 5-10 4-17 5-15 1-9zM1266 746l1 3-2 2-1-3zM649 730l3-1 8 1-3 1-5 0zM1096 740l-11 4-17 1-24 3-17-1-12-2-4-4-7-2-1-1 20-7 32-5 22 4zM839 667l5-1 5 2-1 2-4-1-3 1z"/>
<path fill="#5ad107" d="M911 847l-7 4-3-1-7 2-14-1-9 3 0 1 10-3 14 1 9-2 3-1zM1085 764l0 3 4 0 0-3zM909 752l-24 5-6 11-2 1-14-4-4 0-11 9-2 2 14-10 3 0 13 4 2 0 5-9 4-4 20-4zM952 690l0 2 15 12 12 12 8 12 2 0 1-1-8-11-14-15-13-10zM1148 657l-1 1 0 2 2-1zM829 542l1 2 4 1zM1170 699l-1-2-2-1-3 0-43 23-6 5-4 5-4 5-1 3-2 1-26-13-20-4-7 0-28 5-23 7-5 2-2 0-20-6-11-6-1-1 1-1 1-3-2-3-10-12-6-4-2-4-4-6-5-4-4-9-6-7-3-6-2-9 1-10-1-3 0-6-2-4 1-5-1-5 1 0 1 1 6 1 9 0 10-4 5-5 9 0 6 3 2 2 2 5 6 6 8 3 4 0 10 2 12 1 11 5 9 2 4-1 7-6 7-14 1-9-1-10 1-3-2-6 1-3 0-4 3-4-1-6-3-4-4-1-10-6-7-1-12 0-2 1-4 0-11 5-6 2-6 5-11 10-4 7-4 4-5-3-4 1-5 3-5 5-4 1-2 1-6 0-4-3-3-3-6-2-13-7-3 0-4 3-6-7-7-6 0-4-3-5 1-9 1-5 0-4 1-5 1-5 1-3 4-6 0-3-2-5-1-7-1-3-1 0-9 7-7 10-3 2-4 9 0 2 1 2-1 3 0 8-4 9-1 12-3 8-1 15 2 3 5 4 2 4-1 13-2 3-3 1-8 0-3 1-9 0-9 1-7 3-7 4-4 2-2 2-6 14-5 3-2-3-2-9-10 0-9 4-3 0-2-2-7-13-9-7-3-1-2 0-5 7 0 3-3 3-14 3-6 1-3 2-4 8 1 1 5-1 3 1 1 2 1 11-3 12-2 5 0 7-3 3-1-11-2-1-8-1-11 6-12 9-2 4-2 7-2 2-3-1-8-1-2 2-1 4-4 7 0 5-10 0 0-1 2-1 5 1 0-4-2-2-6 0-14 3-4 2-6 5-1 3-3 3-20-3-19 1-17 9-7 4-6 2-4 3-7 3-5 2-5 2-2 2-5 9 0 2 3 4 2-1 10-10 9-3 15-3 15-6 14 0 4-4 3 0 13 5 12 1 11-4 12-6 5-5 0-4 3-4 2-4 2 2 0 2 3 4 1 0 8-3 10-6 2-3 0-5-2-3 1-1 5 5 4 2 4 4 8 0 9-7 5-16 2-1 0-1 1-1 1 4 4 5 8 2 3 0 9-4 6-6 13-7 2 0 3 3 8 13 1 0 9-7 12-1 16-5 28-6 9 1 8-4 6 0 7 1 2 1 3 4-1 6-9 8-4 7 1 3 8 4 8 3 6 1 8-2 6-2 22-3 8 5 4 0 4-1 3 2 6 2 19 11 21 6 15 6 7 1 2-1 5 1 1 1-59 42-28 23-4 8 0 2 4-8 23-19 66-48 20 2 10 0 16-3 18-1 14-4 5-2 7-5 1-1-1-3 2-2 2 1 3-1 8-9 15-8 3 0 1-2 23-13 3-2zM1097 740l-14 5-13 0-20 3-9 0-16-1-11-2-4-4-6-2-2-1 20-7 31-5 3 0 21 4zM839 667l5-1 5 2-1 2-4-1-3 1zM889 597l1-1 3 3-2 1zM1359 212l-107 0 0 2 1 2-1 14 2 3 1 6 0 5-1 4-2 2 0 3 2 4 5 3 4 4-1 5 2 5 1 5 5 10-14 20-1 3 0 5 4 3 0 3-2 4-2 3 0 2-1 4 0 1 1 3 0 2-5 6-1 2-3 4-2 4-7 6-2 3-4 3-4 5-4 3-4 1-2 2-2 4-9 11-1 5 0 4-2 3 0 4-1 2-3 1-2 2 0 7 1 5-2 4 0 3-2 3 0 3 3 5 0 1-2 3-2 0 0 5-1 2-3 1-1 7-2 4-1 4-3 6-3 3 1 8 3 4 1 3 2 2 0 3-2 3-1 4-4 3-1 3 0 2-2 3 0 3 1 2 0 2-1 2 1 6-2 2-1 4-4 4-3 5-3 3 0 8-2 4 0 5 2 4-4 6 0 9-1 3 0 2 2 3-1 6 2 2-1 12 1 2 0 7-3 6 0 10 5 10 2 6 0 4-1 2 1 6-3 4 0 6-1 1 0 3 1 1 2 0 2-2 1 0 2 2 2 10 4 6 5 2 3 1 2 2 4 1 2 2 5 0 3 2 2 0 4 3 6 1 1 1 7 3 3 2 8 2 8-1 7 5 3 3 1 6 7 11 1 5 3 4 3 5 0 2-2 4 0 5-2 2 0 2-1 3 2 3 1 5-1 10-2 6 1 5-4 12-3 6-7 9 1 4 0 5-2 7-4 7 1 10 1 1 17-22 16-13 5-14 5-20 1-26-5-19 0-26-5-10-2-2-17 0-4-2 3-15 3-26-14-37-3-41 22-56 5-27 2-40 3-66 6-13 12-29 10-19 20-27 2 5 2 2 2-2 4-14 0-3 3 3 7-3 3-2 5-10 4-17 5-15 1-9 0-41zM1266 746l1 3-2 2-1-3z"/>
<path fill="#37cc12" d="M909 848l-5 3-6 0-3 1-15-1-7 2-2 2 1 0 8-3 14 1 9-2 4-1zM847 775l10-7 4-2 9 2 7 2 2 0 1-3-2 2-4 0-14-4zM1086 765l0 2 3 0 0-2zM656 726l-2-1-3-1-2 1-4 0-11 3-6 4-2 2-2 4-3 2-17-2-20 1-3 1-16 8-5 3-8 3-3 3-4 1-3 3-6 1-5 3-5 7-1 3 2 3 1 0 10-9 9-4 8-2 11-4 5 0 5-3 16 0 3-3 3-1 13 5 14 1 10-4 5-3 7-3 4-5 1-4 3-5 0-3-3 0-3-1 3-1 4 1zM951 690l0 1 18 14 9 9 10 14 1 0 0-2-6-9-17-17-13-10zM1188 669l-1 0-2 1 0 1 2 0zM907 595l-1 0-2 2 2 1 1-1zM829 542l1 2 4 1zM656 732l2 1 2 1 2 5 2 0 8-4 8-5 2-2 0-3-3-7 2-1 2 1 4 5 3 2 5 4 8 0 9-7 5-15 1-1 1 0 0-1 2-2 0 3 4 7 8 2 3 0 8-4 7-7 13-6 2 0 3 2 2 5 5 7 2 1 8-6 13-2 16-5 8-1 6-2 11-1 3-1 9 1 4-3 5-2 12 1 2 1 3 3 1 5-2 4-9 8-2 4 0 3 1 2 7 4 9 3 5 0 6-1 8-3 22-2 8 4 5-1 7 4 3 0 5 4 17 9 15 4 20 7 5 1 2-1 3 0 5 1-57 41-30 24-5 9 0 2 4-9 29-23 57-40 3-4 11 2 17 1 20-3 17-1 15-5 5-2 5-5 0-3 3-3 1 1 2 0 8-8 17-10 2 1 0-2 25-14 2-4-2-3-3-1-3 1-43 24-12 12-1 4-1 1-2 0-5-3-5-2-14-7-22-5-5 0-26 5-26 7-6 3-21-7-14-8 1-1 0-2-3-5-5-7-8-6-1-3-6-7-4-3-4-6-1-4-5-6-4-8-1-6 0-21-2-6-1-10 1-1 2 2 5 2 12 0 10-5 10-11 4-1 4 2-1 1-3 0-1-1 4 5 1 0 3-1 3 2 2 10 5 5 3 1 15 3 4 1 8 1 3-1 3 2 6 3 7 2 6 0 7-6 2-5 0-4 3-4 0-3 2-4-2-22 1-2 0-6 3-4 0-3-3-4-11-6-3 0-5-1-5 0-2 1-3 0-2-1-7 0-10 5-5 1-8 6-10 9-7 11-5-2-5 0-7 4-9 10-3 2-2 0-1-3-4 0-1 2 4 1 0 1-2 1-5 0-4-1-11-9-19-18-4-3-7-7 2-2 1-14 1-1-1-6 1-2 0-6 2-5 4-5 0-3-3-5 1-5-1-2-1 0-7 6-1 2 0 5-5 1-5 5-1 7 2 3 0 2-3 3 0 6-4 9-1 14-1 3 0 8-3 5 0 4 4 5 3 3 2 5 0 7 1 2 0 3-4 4-2 1-9 0-7 1-16 1-8 3-11 6-4 9-2 6-2 2-1 0-3 2-3-4-1-6-1-2-10 0-9 3-3 0-3-4-4-9-7-6-7-3-4 5-1 4-3 3-3 2-7 0-4 2-7 1-3 3-2 4 0 3 5-1 4 3 0 13-3 11-2 5 0 6-3 3-1 0 0-9-2-3-8-1-12 7-12 10-2 8-4 4-3-2-7 0-2 2-1 5-4 6 1 2 2 1-6 1zM1097 740l-13 5-17 1-22 3-18-2-12-2-4-3-9-3 0-1 22-7 28-5 5 0 19 3zM839 667l5-1 5 2-1 2-4-1-3 1zM889 596l0-1 7 8-1 0-4-1-1-1zM873 594l1-1 4 0 1 2-1 1-2 0zM877 585l4 4 4 3-1 1-3 1-1-2-1-3-3-2 0-1zM1271 299l-2 0 0 2-4 2-1 3-5 4 0 3 4 0 1 1 0 3 6 0 1-2 0-3-2-1-2-1 0-1 1-1 2-4 2-3 0-2zM1359 212l-105 0 2 9-1 7 4 17-2 8 8 7 4 6-4 3 2 7 2 3 1 3 4 5 0 3 2 3-2 4 5 0 1 1 5 10 1 4-2 4-8 4-5-1 0 3 1 3-2 1-7 2-4 6 0 4 2 4 2 0 2 2-1 4-2 2-9 0 0 2-2 2-3 1-4 7-2 2-2 0-1 2-1 2-6 5 0 1 1 4-2 2-2-1-2 0-3 3-4-1-2 2 0 4 3 2-1 5 1 1 6-4 4 1 3-4 2 0 0 3-2 2-2 0-1 5-2 2-2 0-6-3-2-2-3 0-2 1 0 4-5 4 0 2 8 10 1 3-1 4-1 1-2-1 0-2-7-2-2 3-1 0-3 2 0 4 1 2 0 9 0 3 2 4 0 2-2 4 1 5 2 3-2 3 0 4-1 1-2-1-4 0-1 1 0 3-2 5-3 2-3 3-2 0-2 3 2 3 0 2-1 1 0 2 7 4 1 5 3-1 2 2 0 2-3 4 0 11-1 2-3 0-1-2-1-5-1 0-1 2-1 3-5 4 2 7 3 2-1 2-1 2-1 4-1 2-2 1 0 1 2 3-3 3-2 2-4-1-1 2 0 3-4 4 1 4 2 4 3 2 0 1-3 2-2 2-1 17 0 2 4 3 0 5 2 3-2 1-1-1 0-1-2-1 0 2 1 5-1 2-3 0 1 3 3 4 0 6-1 3-3 3-2 3 0 6 3 4 5 2 5 0 3 3 7-4 3 0 4 8 0 3 1 2 0 4 3 4 0 2-2 5-2 2 0 3-2 0-3-2-1 1-1 3-3 0-2-2 0-13-1-1-4 0-3-4-2 0-1 1-1 13-2 4 2 2 2 1 5 2 0 2-3 3 1 3 3 2 1 3 4 2 2 3 4-1 3 2 3 0 1-2 4-1 3-2 2 0 4 4 0 4-1 1-3-1-3 0-1 1 2 1 3 1 2-1 1 1 1 4 5 1 4 3 6 1 6 4 9 0 11 6 3 3 2 8 6 8 0 7 5 4 2 3-1 12 0 2-4 3 3 3 0 2-2 2 1 4 0 3-1 1 0 6-3 7 0 6-3 12-7 11-2 7 0 6-5 11-1 4 0 6 1 1 16-21 16-13 5-14 5-20 1-26-5-19 0-26-5-10-2-2-17 0-4-2 3-15 3-26-14-37-3-41 22-56 5-27 2-40 3-66 6-13 12-29 10-19 20-27 2 5 2 2 2-2 4-14 0-3 3 3 7-3 3-2 5-10 4-17 5-15 1-9 0-41zM1266 746l1 3-2 2-1-3zM1200 693l2 1-1 2-2-1zM1180 622l4 4-3 3-2-1-1-1 0-3zM1172 580l1 3 0 2-2 1-1-2 0-2zM1225 401l2 2 0 1-2 3-2 1-1-2 0-3 1-1z"/>
<path fill="#21ca33" d="M907 850l-2 1-6 0-3 1-15-1-10 4 1 0 8-3 13 1 12-2zM540 764l-4-1-5 4-2 3 0 3-2 1 0 1 1 0 2-2 3-1 2-3 5-4zM561 755l-3-1-4 1-6 6 0 1 6 0 7-6zM655 727l-2-2-2 0-3 2-5 0-10 2-7 6-2 4-2 2-21-2-5 1-13 0-3 2-4 2-3 2-5 2-5 6 5 3 4 0 4-2 15 0 4-3 4-1 13 5 4 0 4 1 5 0 9-3 7-4 4-1 4-4 2-3 0-4 4-5 0-2-3 0-3-1 5-1zM952 690l0 2 16 12 12 12 7 11 2 1 0-2-7-10-15-15-13-10zM658 733l2 0 1 4 2 1 9-4 7-4 2-2 0-4-2-6 3-2 5 7 4 1 4 4 8 0 3-3 6-4 4-14 3-1 0-1 2-2 1 0 0 2-1 1 1 1 3 5 8 2 3 0 9-4 2-3 4-4 13-6 2 0 3 2 2 4 6 9 2 0 6-5 14-2 16-5 8-1 8-3 6 0 6-2 9 1 7-5 15 0 5 7 0 6-1 3-9 7-1 3 0 4 1 2 7 3 8 3 10-1 10-3 7 0 9-2 4 0 8 3 4-1 6 5 3 1 2 0 5 4 15 8 19 5 17 7 7 0 2-1 8 2-2 1-66 47-21 18-4 9 0 1 4-8 22-19 65-46 2-3 19 2 12 0 15-2 18-1 15-5 9-5 2-2 0-3 2-2 2-1 2 1 9-9 12-7 5-2 1-1 24-13 3-3 0-3-3-2-5 0-41 23-5 3-9 11 0 2-2 2-3 0-2-2-21-10-23-5-31 5-26 8-4 2-13-4-13-4-13-8 1-3-2-5-3-2-1-3-2-2-3-1-3-3-2-4-9-9-2-4-3-2-1-5-5-4-1-4-2-3-2-8 0-22-1-6-2-4 0-6-2-3 1-1 6 5 3 1 11 1 13-5 11-12 3 0 5 2 11 13 0 3 6 5 5 0 3 2 8 0 3 1 3 1 7-2 1 0 6 6 11 2 3-1 4-4 0-5 3-3 0-8 3-6 0-11-2-2 1-4-1-5 3-5 2-7-4-4-6-2-2-1-16-1-3 3-2-3-5 0-8 4-6 1-3 3-5 1-10 10-2 5-3 3-1 4-8-4-4 0-6 3-11 12-7 2-1 1-6 0-6-3-7-5-19-19-4-3-8-8-2-1-2 0-1 1-1-1 0-2 1-1 4-1 1-2 0-9 1-7-2-9-1-2-1 0-2 2-1 7-4 7 0 4-6 6 0 7-1 2 0 2 2 7 1 0 6-6 2-1 3 6 8 6-4 1-1 2-1 2 3 12 0 1-3-3-5 0-4-3-1 0-1 1 0 10 2 3 3 8 6 5 0 4-1 2-4 0-4 3-3 1-6-4-7-2-25 2-8 3-10 5-4 7-3 9-1 1-3 0-3 2-2-4-1-6-1-2-11 1-8 3-2 0-3-2-6-11-2-3-7-4-4-2-3 4-2 4-2 3-4 2-6 1-11 3-3 2-2 4 0 1 6 1 2 2 1 2-1 12-2 10-2 6 0 6-5 4 0-1 0-9-2-2-8-1-12 7-11 9-2 5 0 3-6 4-4-1-5 0-1 1-1 4-4 6 0 3 2 1-5 1zM1098 740l-11 4-5 1-13 1-20 3-7 0-17-2-11-2-2-2-11-5 22-7 31-6 23 4zM839 667l5-1 5 2-1 2-4-1-3 1zM802 666l0 2-2 1-1-1zM1015 615l1-1 2 0 0 2-2 0zM1007 614l3-1 1 1 0 1-2 1zM976 609l1 0 2 2-1 1zM971 603l1 0 1 1 2 2-1 1zM1006 596l1 1 0 2-1 1-1 1-2-2 0-1 2-2zM888 595l1 0 15 15-1 1-4-4-3-1-5-1zM1002 588l3 0 2 3-1 1-3 0-1-2zM1019 588l0 4-4 2-2 2-2 0-2-1 0-1 3-3 0-4zM1290 293l-1 1 0 3 2 1 1 0 1-3-1-1zM1359 212l-102 0 0 20 3 6 2 15 13 14 4 3 2 4 5 1 6 6 0 4 4 3 1 4-2 2 0 3-2 2 0 2-2 4-1 4-3 6-6 7-4 5-3 7-3 3-3 7-1 5-7 5 0 4-4 4-1 4-1 5-1 1-3 0-3-1-1 1 0 5-3 5-1 5-3 3-1 2 0 3-2 3-1 5-8 7-1 3-3 3-1 4-2 2-4 10-5 7-1 5-4 3 1 17-1 4-3 4 0 5-2 2 1 6-1 3-1 5-1 2 1 6 0 5-1 3 0 9-4 5 1 4-3 6-4 3 0 3-3 5-1 6-3 5-1 4-3 4 0 8 1 2 0 4 1 3 0 3-3 4-1 2 1 14 1 3 0 5 6 6 2 5 0 5 3 6 1 6 7 8 0 7 2 4 0 5 2 4 0 3 2 4 1 8 2 3 1 4 2 4 0 6 2 9 3 2 4 1 13 6 5 1 8 4 6 3 5 4 2 5 3 4 4 9 2-1 0 4 2 1 4 13 0 9-2 6 0 5-2 4 0 6-3 5-2 6 0 7-3 12-4 5-2 5-3 9-1 6-2 3-3 7-1 7 1 2 15-20 16-13 5-14 5-20 1-26-5-19 0-26-5-10-2-2-17 0-4-2 3-15 3-26-14-37-3-41 22-56 5-27 2-40 3-66 6-13 12-29 10-19 20-27 2 5 2 2 2-2 4-14 0-3 3 3 7-3 3-2 5-10 4-17 5-15 1-9 0-41z"/>
<path fill="#0bc854" d="M871 855l10-4 13 1-15-1zM1019 756l-68 48-19 16-5 10 4-8 23-19 64-46zM653 727l-4 1-4 0-5 1-4 0-3 2-5 4-3 5-3 3-3 0-4-2-10 0-3-1-3 0-6 2-9 0-3 4-4 0-5 5 2 3 14-1 7-3 6-1 1 2 6 3 12 2 4 0 11-4 5-3 7-2 2-4 1-5 3-4 0-3-4-1 4-1zM952 691l2 2 15 11 10 11 8 11 2 2-1-3-5-8-17-17-13-9zM1026 622l-2 0-5 6-1 3 2 3 5-4 2 0 1 1 2 0 1-2 0-3-2-1zM1002 613l-4-1-3-2-2 1-2 4 0 5 2 4 3-3 5-2 1-1 1-4zM1018 602l0 1 1 1 5 0 0-3-5 0zM1033 596l-4 0-4 2 0 3 3 1-1 2-2 1 1 2 5 0 0-1-2-3 4-2zM1015 581l1 2 2-1-1-1zM658 733l3-1 1 4 2 1 11-6 5-4 0-2-1-4-1-2 5-4 2 3 3 4 5 2 4 3 5 0 9-7 4-12 1-1 3-1 0-1 3-3 1 6 3 4 9 2 9-4 5-6 14-7 3-1 2 1 2 2 2 5 6 7 7-5 3-1 11-1 11-4 14-2 8-3 7 0 6-2 7 1 6-5 8-1 3 1 1-1 2-3 2 0 2 1 1 7 3 3 0 7-1 3-9 7 0 6 0 1 4 1 6 4 3 1 10 0 10-4 10 0 7-2 7 1 3-1 12 9 6 1 19 11 15 5 22 8 5 0 4-1 12 3 24 1 20-3 17-1 16-5 8-6 0-3 3-3 3 1 8-9 41-22 4-4 1-2-1-2-2-1-5 1-41 22-5 4-9 10 0 3-2 2-2 0-25-13-23-5-30 5-25 8-6 2-23-7-17-10 0-4-5-7-3-2-5-5-7-8-4-2-2-3 0-1-6-5 2-4-4-4-1-3-4-3 0-3-2-6 0-13 1-2-1-13-4-12-3-4-7-5-5-1-3-2-2-10-2-3 1-1 8 10 10 9 11 8 5 2 12 1 9-4 3-2 6-8 4-3 4 0 5 3 8 9 8 7 4 0 2-3-1-2-9-9-6-8-12-6-4 0-4 2-3 3-8 9-4 2-4 1-1 1-8-1-9-5-9-9-13-13-4-3-6-7-4-1-3 2 0 3 5 6 7 6-4 0-2 3 0 4 3 12 0 4 1 2 0 5 2 3 1 14-1 2-2 2-3-1-3 2-5 0-3 2-4 0-4-3-1-3-3-2-1 0-3-2-7-1-9 1-3 1-6 0-9 3-8 5-2 2-6 14-3 0-4 3-3-4-1-6-1-2-9 0-8 3-3 0-3-2-8-12-7-5-3 0-4 3-1 3-4 4-3 1-5 0-9 3-3 2-3 3 1 1 3 0 3 4 0 11-2 12-3 7 0 6-5 5-1-10-1-2-3-1-5 0-5 2-16 13-2 4-1 4-7 5-1-1-7 0-2 1 0 3-4 6 0 3 1 1-5 1zM1098 740l-4 2-10 3-17 1-16 3-12 0-15-2-10-2-3-2-9-4-2-1 22-7 34-6 21 4zM839 667l5-1 5 2-1 2-4-1-3 1zM803 665l0 1-1 2-1 1-1 0-1-1zM1359 212l-100 0 1 5-1 14 2 7 1 7 3 9 10 10 3 1 2 2 3 5 4 1 7 6 5 9 1 4-3 5 0 3-8 16-7 8-3 4-3 6-4 6-4 9-6 9-1 3-2 3 0 4-3 5-5 4-2 4-3 4-2 4-3 4 0 3-3 3-2 6-7 6-3 5-1 4-3 3-5 12-3 5-2 4-4 4 1 4 0 12-3 9-1 7 0 9-2 10 0 4-1 7 0 6-1 5-3 3 0 4-3 3 0 3-3 3-3 7-2 6-3 5-4 11 2 12 0 5-2 4 0 20 1 3 8 12 0 5 2 4 1 4 7 12 2 15 2 6 2 3 1 5 1 2 0 3 4 11 0 8 2 6 3 3 5 1 7 3 1 0 5 3 3 0 8 5 3 0 2 2 12 13 4 8 0 3 2 0 2 2 2 8 2 5 0 12-2 6 0 5-2 4 0 4-2 4-4 11 0 6-3 11-5 9-4 10 0 5-3 4-3 7 0 4 1 1 13-17 16-13 5-14 5-20 1-26-5-19 0-26-5-10-2-2-17 0-4-2 3-15 3-26-14-37-3-41 22-56 5-27 2-40 3-66 6-13 12-29 10-19 20-27 2 5 2 2 2-2 4-14 0-3 3 3 7-3 3-2 5-10 4-17 5-15 1-9 0-41z"/>
<path fill="#05c67b" d="M963 796l-11 8-20 17zM648 737l-3-6-4 1-4-1-6 3-2 4-2 5-4 4-4 0-4-4-6 0-1 2-1 2 3 2 6 3 10 1 6-3 4-1 3-1 7-2 2-3zM676 719l-6-2-2 1-1 4-3 5-1 0 0 3-1 0 1 4 2 0 3-2 6-2 4-7 0-2zM952 691l3 3 14 10 10 10 8 12 2 1-7-11-14-14zM677 718l3-1 5-4 1 4 2 3 3 0 7 5 2 0-1-3 1-1 4 1 6-3 4-10 2-2 1 0 1-2 4-4 1 6 3 4 9 2 8-4 6-6 16-8 3 0 3 3 1 4 7 7 7-4 12-1 15-6 10-1 9-3 7 0 6-2 6 0 4-4 4-1 2-3 0-6-2-1-5-6 0-2 2-1 3-1 2 5 2 2 1 3 1 0 4 0-1-2 0-1 3-3 11 18-1 1-1 0-1 1 2 3 0 4 2 3 0 2-2 2-1 5-5 2-2 3 5 5 4 3 11 1 5-4 5 0 2-1 2 0 3 1 4 0 6-2 6 1 1-1 15 10 3 2 2-1 4 3 15 9 28 8 9 4 7 1 2-1 11 2 23 2 21-3 17-1 15-4 9-5 2-2 0-3 3-3 3 1 7-9 42-22 3-3 1-1 0-3-2-2-3 0-45 24-12 13 0 3-2 2-2 0-25-13-21-4-6 0-27 5-24 7-5 2-21-6-16-8-13-10-6-7-9-14-2-3-4-2-6-8-1-3-4-4-7-13 1-8 2-3 0-7 3-5-1-2-3-5-3 0-2 2-2 0-2-3-1-2 2-3 3 0 1 1 2 1 1-3-5-6-4-1-4 0-1-1-4-16-3-3-3-1-1 1-1 4 9 34 4 19 2 4-1 2-1 2-2 0-4-6-4-2-6 1-4-1-3 2-3 1-6-12-2-3-2 0-1 1-1 3-2-3-3-2-11 0-4 2-7 0-3 1-2 0-5 2-4 3-5 7-6 12-1 4-1 1-3 0-1-2 6-5-3 0-4 3-3-5-1-6-1-1-4 1-5 0-6 2-5 0-3-3-8-11-5-4-2 0-4 2-3 4-8 4-5 1-9 4 0 2 3 3 1 3 0 5-3 17-3 6 0 6-7 6-1-11-2-1-7 0-15 11-5 5-1 2 0 3-5 3-3 3zM1098 740l-2 2-11 3-16 1-20 3-7 0-16-1-11-2-4-3-11-4 0-1 24-8 28-5 5 0 21 4zM898 682l1 0 2 1 2 1 1 1 0 2-2 2-2-1-2-3zM903 678l1-1 3 0 1 1-2 2zM878 671l5-1 3 3 1 7 1 2 0 3-1 1-3-2-7-12zM839 667l5-1 5 2-1 2-4-1-3 1zM875 578l0 3 1 2 7 7 4 2 18 19 14 10 9 2 5 0 4-2 8-4 11-11 3-1 5 3 8 9 8 7 2 1 2 0 2-2 0-3-8-7-4-6-5-5-9-5-4 0-6 3-10 12-4 2-4 0-1 1-8 0-6-4-5-4-19-19-4-3-8-8-4-1zM1359 212l-98 0 0 3 1 3-1 4 0 11 2 4 1 7 2 8 6 5 4 5 4 2 5 6 7 4 3 3 6 9 0 8-2 3 0 4-5 9-3 4-1 3-7 8-4 6-1 3-4 6-8 15-3 4-2 5 0 5-7 8-3 5-4 6-4 7-4 10-9 8-10 22-4 5-2 6-3 2 1 11-1 3 0 5-2 4-2 10 1 9-4 18 0 8-1 3-1 4-4 6-2 7-3 3-3 6-2 7-2 4-4 9 0 7 2 9-2 6 1 13-1 1 0 5 6 10 6 17 3 4 1 5 3 4 0 9 3 11 2 4 1 3 3 5 0 5 3 6 0 10 2 6 1 1 2 1 10 2 6 5 4 1 14 7 15 18 2 5 4 4 1 6 2 5 1 10-3 16-5 11-1 8-2 4 0 5-3 11-4 6-4 9-1 9-4 5-3 6 0 2 1 1 12-15 16-13 5-14 5-20 1-26-5-19 0-26-5-10-2-2-17 0-4-2 3-15 3-26-14-37-3-41 22-56 5-27 2-40 3-66 6-13 12-29 10-19 20-27 2 5 2 2 2-2 4-14 0-3 3 3 7-3 3-2 5-10 4-17 5-15 1-9 0-41zM1308 234l-2 2-7 4-2 0 1-2 9-5z"/>
<path fill="#00c19e" d="M1282 756l-2 0-1 4-1 13 5 9-1 1-4 2-1 5-4 4-2 4 0 2-3 9 1 4-3 7-1 4-8 17 0 9 1 1 5-6 9-6 4-4 5-14 5-20 1-13-3 0 0-1 1-1 2 0 0-11zM636 735l-1 0-2 2 1 2 3 0 0-2zM667 727l-2 0-1 2 2 0zM685 712l-2 0-5 4 0 1 1 0 6-4zM873 658l0 3 5 2 3 3 4 0 3-3 0-1-2-3-4 0-2-3-4 0-2 0zM853 645l-6-5-4 2-5-1-8 2-4 0-6 2-4 2-1 3-3 3-7 12-2 4-2 2-1 0-3-2 0-1 5-3 1-2-1 0-5 3-2-2-2-2-1-6-1-1-6 3-14 0-10-9 0-3-1-2-4-2-2 0-6 5-7 3-6 1-5 4 0 3 1 9-2 4-1 15-4 6 0 4-9 8-1-12-2-1-5 1-5 3-2 1-4 5-4 2 0 3-4 2 0 3 1 2 3 2 5 1 9 1 3-2 3-6 1-1 4-1 0-2 6-5 0 5 4 5 7 1 9-4 5-5 9-4 8-6 3 0 2 1 4 4 0 4 6 4 6-2 12 0 14-6 10-1 9-3 7-1 9-2 3 0 3-3 3-1 0-2-4-1-2-2 0-4-2-6-4-2-3 1-2-3 4-1 4 1 5-5-1-3 2-4zM857 640l1 4 13 26 15 26 5 5 14 9 16 4 4 2 19 13 3 0 4 3 17 9 19 6 20 7 6-1 12 2 24 2 16-3 17-1 6-1 16-6 5-4 0-2 3-4 2-1 2 1 7-8 44-24 2-4 0-1-2-2-4 1-43 23-13 14 0 2-2 2-2 0-3-2-8-3-13-8-23-4-31 5-26 7-5 3-22-7-17-10-16-14-10-16-2-2-3-1-10-14-12-22-13-51-2-6-4 0-2 2 0 4 6 21 8 33 13 23 10 14-1 2-3-4-2 0 0 2 3 3 2 0 1-1 0 1 0 1 10 17 0 1-7-4-16-3 0-1 3-3 2-3-1-1-1 1-2 0-1-1 0-1 3-2 0-2-1-1-2 1-1 2-5 1 0 2 2 4 0 1-9-7-18-29-12-25-2-2zM1099 740l-5 3-10 3-17 1-16 2-12 0-15-1-11-2-3-3-9-4-2-1 24-8 28-5 7 0 19 4zM875 579l1 3 5 6 7 5 9 10 9 9 14 9 9 2 8-2 9-5 9-10 1-1 3 0 6 3 8 10 8 7 3 0 2-2 0-2-1-2-8-8-7-8-10-6-3 0-6 3-3 2-8 10-4 2-4 0-1 1-8 0-7-4-6-5-18-19-5-3-5-6-3-2-1 0zM1359 212l-96 0 0 2 1 3 0 7-1 4 0 5 5 12 0 5 6 6 2 3 5 5 3 4 6 4 5 1 7 8 2 4-1 8-2 8-5 8-3 5-3 5-8 9-3 8-3 4-4 7-5 11-3 3 0 3-2 3-1 3-14 20-3 6-1 6-3 5-8 7-2 3-2 4 0 3-4 7-1 5-4 3-2 4-1 3-2 6-1 15-2 5 0 7-2 3 1 13-1 7-3 5 0 9-1 3-1 5-5 7-1 4-3 3-4 8-1 5-6 12 0 9 1 5 0 11-1 5 2 5-2 4 0 4 6 7 2 6 0 4 4 7 1 3 2 2 2 4 3 4 0 5 1 2-2 3 1 6 1 5 4 5 0 4 5 4-1 6 1 1 4 1 1 1-3 3 0 10 3 6 9 1 2-2 2 0 1 5 4 4 2 0 6 5 7 3 10 12 5 4 4 6 3 4 2 4 1 1 5 0 0-22-5-10-2-2-17 0-4-2 3-15 3-26-14-37-3-41 22-56 5-27 2-40 3-66 6-13 12-29 10-19 20-27 2 5 2 2 2-2 4-14 0-3 3 3 7-3 3-2 5-10 4-17 5-15 1-9 0-41zM1311 232l-3 4-7 5-4 1-1-2 0-1 2-2 11-6z"/>
<path fill="#00b8ba" d="M1287 792l-5 1-3 2-4 0-2 2 0 4-2 4-1 12-2 3 1 5-3 6-1 4-1 2-3 3-1 2 0 4 1 1 13-9 3-4 4-13 5-20zM667 727l-2 0-1 2 2 0zM684 713l-1 0-5 4 1 0zM1220 697l0 1 1 1 3-1-1-2zM709 695l-2 1-1 3-4 2 0 2-3 3-1 2 0 2 5 0 3-3 4-1 1-2-3-1-1-1 0-2 2-2zM745 688l-1 2 2 2 4-1-1-3zM752 694l-1 0-2 1-4 0-2-2-2-5-3-3-3 0-1 1 0 6-5 6-3-2-3 1-10 9 0 1 1 1 3-1 0-2 9-8 0 2-2 3 1 1 3 3 0 2 5 0 3-2 3-2 2-1 8-3 4-5zM738 673l0 2 3-1-1-1zM802 663l-5 3 0 1 5-3zM846 647l-8 0-3-1-4 4-1 0-3-2-2 2-3 3-2 4-5 0-4 3-3 5-5 6-5 0-4-5-4 0-4-2-1 6-6 2-1-1-1-2-3-3 1-5-4 0-7-7-9 1-7-3-3 0-4 3-1 0-3-2-1 0-2 2 0 3 2 1 2 7 1 1 3 0 1 2 2 7 5 4 4 0 2-1 4-5 1-2 1-1 1 0 4 2 5-1 2 2 0 3 1 2 4-2 6 5 0 2-3 1-3 2-1 4 1 3 4 4 0 3 5 0 7 1 5-2 6-3 1-1 0-1-2-1 2-3 3-2 2 1 0 2 1 1 3 0 1-1 0-3 3-3 5 1 1 3 1 1 7-1 2-1 0-2 6 0 0-2 0-2-2-2 0-2 3-6 0-4-2 1-1-2-3 1-4-3 0-2 2-3 4 0 1-1 2-4 2-2 2-5zM806 679l2-1 2 3 3-1 8 1 2 1 0 1-2 1-8 0-5-2zM857 641l2 5 14 27 13 23 5 5 13 9 19 4 20 14 2 1 2 0 21 12 20 6 18 6 4 0 2-1 16 3 23 1 16-2 17-1 6-2 13-5 6-4-1-2 4-4 2-1 2 1 8-9 42-23 3-3 0-2-2-1-3 0-44 23-4 4-4 5-4 5-2 5-3 0-3-3-22-11-20-4-7 0-28 5-25 8-3 2-2 0-21-7-18-10-15-14-10-16-2-2-3-1-11-15-12-22-10-42-3-12-2-2-3 0-1 1-1 3 8 27 6 29 13 22 10 14 0 4 2 5 10 15 0 1-5-4-4-1-15-4-11-7-5-4-16-28-13-26-2-1-1 0zM1099 740l-3 2-11 4-16 1-20 3-7 0-16-2-12-2-4-3-12-5 1-1 23-7 31-5 3 0 21 4zM876 578l0 3 7 8 4 3 18 18 15 11 6 1 7 0 6-2 6-3 11-12 2 0 6 3 8 9 9 8 4 0 1-1-1-4-7-7-9-10-6-4-4-2-5 1-3 2-11 12-2 1-6 1-2 2-8-1-10-8-19-19-5-3-7-8-4 0zM1359 212l-91 0 0 3-1 2 0 4-2 6 0 5 3 7 3 3 1 7 4 5 3 5 7 8 6 3 5 2 7 6 2 3 0 11-4 10-8 12-2 5-9 11-4 8-3 4-10 19 0 4-11 16-1 3-4 5-4 8-1 5-6 10-2 2-2 1-4 5-1 6-2 3-1 5-2 3-5 5-1 3 0 8-2 5 1 6-2 3 1 7-2 3-3 7 0 3 4 8-4 7 0 4-3 3-1 7-2 9-6 8-2 4-2 2-3 7-1 5-6 12-1 8 1 3 1 7 1 6 0 12-1 4 2 3 1 3 8 11 1 8 1 2 2 2 1 3 7 5 4 8 0 3-3 4-3 0-1 1 1 6 3 4 4-4 4 3 0 6 4 1 3 6 0 8 4 6 1 6 3 4 4 8 8 7 7 3 17 18 2 3 4 3 4 4 2 0 0-18-5-10-2-2-17 0-4-2 3-15 3-26-14-37-3-41 22-56 5-27 2-40 3-66 6-13 12-29 10-19 20-27 2 5 2 2 2-2 4-14 0-3 3 3 7-3 3-2 5-10 4-17 5-15 1-9 0-41zM1312 230l1 2-1 2-4 4-3 1-4 4-3 0-3-2 0-2 1-1 6-5 8-4 1 0zM1312 216l2 1 0 3 4 5 0 1-4 3-3-1-3-3 1-1 3-1 1-2 0-1-3-2 0-1z"/>
<path fill="#02a3d0" d="M1283 795l-2 1-4 1-4 7 0 20-6 15-4 4 1 2 10-7 3-4 4-13 5-20 0-6zM1101 744l-2-1-16 5-30 4-1 1 0 1 5 0 11-2 17-1 14-5zM951 725l0 1 3 2 16 9 23 7 13 6 12 3 2 0 1-1 0-2-1-1-11-2-15-6-27-9-13-8zM1142 714l-1-1-2 0-20 11-11 12-1 2 0 1 2 1 13-13 19-11zM726 697l-2-1-11 10 0 1 4 0 0-2zM790 673l0 2 3 1 3 3 3-2 2 0 2-2-7-4-4 1zM821 670l0 1 2 2 1-2-1-1zM915 615l1 1 9 4 1-1 0-1-10-3zM889 612l0 4 3 15 5 20 8 17 27 40 12 12 2 0 0-1-12-11-29-44-5-11-6-20-3-19-1-2zM960 600l-3 0-5 1-1 1 3 1 6-2zM878 579l0 1 8 6 1 0 0-1-7-6zM1359 212l-38 0 0 17-4 4-3 1-5 5-3 2 0 6-1 3-2 1-4-1 0 3-1 1-3-1-2-3 2-4-1-7 9-9-1-5 1-2 0-5 3-4 0-2-35 0 1 6-3 3-1 6 2 10 3 4 2 7 4 7 6 9 3 2 11 5 6 5 3 4 0 12-5 12-11 17-8 9-3 7-3 4-5 8 0 3-3 4-2 8-4 5-1 4-14 21-3 12-4 5-2 4-4 4-3 4-1 4-2 6-6 9 0 9-3 6 0 18-2 6 0 4-1 3 1 10-4 8-4 8-1 5-2 4 0 3-11 14-2 5-3 9-5 11 0 5 3 14 1 16 1 1-1 5 8 11 4 9 2 4 5 5 1 2 3 3 4 9 0 2 2 3 0 7 2 3 1 3 4 8 2 2 0 4 3 8 2 8 2 4 3 7 8 8 6 3 15 14 4 3 5 6 3 2 2 0 0-14-5-10-2-2-17 0-4-2 3-15 3-26-14-37-3-41 22-56 5-27 2-40 3-66 6-13 12-29 10-19 20-27 2 5 2 2 2-2 4-14 0-3 3 3 7-3 3-2 5-10 4-17 5-15 1-9 0-41z"/>
<path fill="#0782df" d="M1286 797l-2 0-5 2-5 5 0 4 2 5 0 9-3 7 0 3-3 6 1 2 3-2 3-4 4-13 5-20zM1100 744l-2 0-14 4-29 3-3 1 0 2 4 0 11-2 17-1 16-6zM951 725l1 2 14 8 27 9 14 6 12 3 2-1 0-1-2-2-10-2-15-6-23-8-7-3-10-6zM1141 713l-3 0-18 10-12 12-1 4 2 0 1-2 4-2 8-8 17-10 2-2zM726 697l-2 0-10 10 2-1 0-1zM916 615l1 2 7 2 2 0-1-1-7-3zM889 612l0 3 3 15 6 23 7 15 28 41 11 10 2 1 0-1-11-10-30-44-6-13-5-21-3-17zM960 600l-4 0-4 1 0 1 4 0 3-1zM878 580l7 6 2 0-7-6zM1359 212l-35 0 0 19-5 6-7 4-1 8-2 3-7 6-6 2-2 0-1-2-3-8 3-7 0-5 4-4 1-5 3-5 0-7 2-3 0-2-30 0 0 7-2 3 0 8 1 7 9 17 5 5 3 5 9 4 8 6 3 5 2 6-1 3-1 7-5 10-13 19-6 8-3 6-7 11-2 4-2 4 0 2-2 6-5 9-14 22-2 9-5 8-2 4-4 4-8 17-3 4-1 12-2 5 2 4-1 4 0 8-3 8 0 16-8 17-1 2-2 4-1 5-11 15-2 6-1 5-7 13 1 7 3 6 0 13 2 12 7 11 2 7 4 7 9 9 2 5 3 4 2 6 0 6 1 6 6 11 1 3 5 14 0 5 3 6 2 4 10 9 2 0 0 1 2 1 3 4 12 9 10 9 2 0 0-11-5-10-2-2-17 0-4-2 3-15 3-26-14-37-3-41 22-56 5-27 2-40 3-66 6-13 12-29 10-19 20-27 2 5 2 2 2-2 4-14 0-3 3 3 7-3 3-2 5-10 4-17 5-15 1-9 0-41z"/>
<path fill="#105bdf" d="M1277 834l-2 0-2 2 1 1zM1286 799l-2 0-5 2-3 4 2 9 0 10-2 5 0 2 1 1 1-1 3-10zM1100 744l-2 0-13 4-29 3-3 1-1 2 3 0 15-2 13-1 16-5zM952 725l0 1 2 2 15 8 23 8 15 6 10 2 3 0 1-1-2-2-9-2-15-6-27-9-15-8zM1257 717l0 2 3 4 12 7 3 4 3 2 1 2 3 0 0-8-5-10-2-2zM1141 714l-3-1-19 11-11 12-1 3 2 0 2-3 2-1 9-9 18-9 1-2zM916 615l1 2 9 2-2-1zM889 612l0 3 3 15 6 22 7 15 29 43 9 8 3 2-1-2-11-10-29-44-6-12-5-20-3-17zM960 600l-4 0-4 1 0 1 3 0 4-1zM879 580l4 4 4 2-4-4zM1359 212l-32 0 0 2-1 2 0 6 1 3-1 7-5 7-6 3-2 9-12 13 2 4 9 9 1 9-2 4 0 3-6 13-8 11-4 7-7 8-3 7-8 12-3 6 0 4-6 13-9 15-4 6-3 10-3 3-1 3-3 3-1 4-3 4-7 14 0 3-4 6-1 7 1 11-2 5 0 10-3 4 0 3 1 2-2 3 1 12-12 21-1 6-1 2-2 3-7 8-2 7-1 4-3 6-1 4-3 3 1 6 5 11-1 10 1 4 1 6 7 11 1 6 4 5 0 2 8 8 3 6 5 7 0 15 2 4 5 6 0 5 4 7 1 5 2 4 0 7 5 7 8 8 2 0 3-15 3-26-14-37-3-41 22-56 5-27 2-40 3-66 6-13 12-29 10-19 20-27 2 5 2 2 2-2 4-14 0-3 3 3 7-3 3-2 5-10 4-17 5-15 1-9 0-41zM1299 212l-24 0 0 9-2 7 0 3 7 15 3 4 2 2 4-7 1-3 2-3 2-7 1-5 4-4z"/>
<path fill="#1b32d9" d="M1284 801l-3 3 0 6 3 0 2-7zM1100 744l-1 0-13 4-32 4-2 1 6 1 10-2 17-2 15-5zM952 725l0 1 18 10 23 8 15 6 10 2 3 0 0-1-2-2-10-2-15-6-23-7-9-4-8-5zM1259 718l0 2 2 2 7 3 3 1 3-2 3 1 1 1 0 4 4 1-5-11-2-2zM1141 714l-3-1-19 11-11 12-1 3 2 0 1-2 4-2 7-8 19-11zM916 616l6 2 3 1-5-3zM889 613l0 1 3 17 6 21 7 16 28 40 11 11 2 1-12-12-29-43-6-12-5-20-3-17zM959 600l-6 1-1 1 7-1zM879 580l7 6 1 0-7-6zM1359 212l-30 0 0 2-1 3 1 16-1 2-5 5-3 2-2 6 0 2 3 4 0 6-1 1-6 0 0-1 2-2 0-1-2-1-2 4-4 0-2 2 0 3 3 5 2 2 4 0 1 1-1 5 2 3-3 10-8 16-4 6-5 6-4 6-6 8-4 8-6 10-4 7 0 2-2 5-2 5-7 13-3 7-5 6-2 8-3 5-1 3-4 4-1 4-3 4 0 5-2 1-2 6-2 2-2 6-2 3-1 4 1 3 0 7 1 3-1 3-1 12-1 2-2 2 0 6-1 2 0 13-5 8-1 3-2 2-3 6 0 4-1 2-1 4-2 3-8 8 0 2-2 4 0 3 4 6-3 1 0 2-1 2-2-2-2 0-3 5 0 2 1 2 2 2 2 2 2 0 6-3 0-2-3-1-2-1 0-3 1-1 8 0 2 2 0 8-4 5 1 3-3 3 0 1-4 4-1 5-1 2 0 3 3 2 1-1 0-1 1-1 1 0 2 1-1 7 2 4-1 7 3 1 4 4 2 6 3 3 3 9 3 4 2 3 1 7-2 6 0 3 2 2 5 5 2 10 3 5 0 4 3 3 0 5 2 4 1 5 8 8 1-1 3-13 3-26-14-37-3-41 22-56 5-27 2-40 3-66 6-13 12-29 10-19 20-27 2 5 2 2 2-2 4-14 0-3 3 3 7-3 3-2 5-10 4-17 5-15 1-9 0-41zM1215 541l2 1-1 2-2-1zM1317 269l1-1 3 0 1 1 0 1-2 1-2 0zM1321 261l2-1 4-1 1 1 0 2-1 1-2 1zM1296 212l-18 0 1 8-2 7 0 3 2 6 2 3 1 4 2 1 2-1 0-2-3-3 2-3 0-3 3-5 0-3-1-2 2-2 4 2 3 0-1-6z"/>
<path fill="#3d17d0" d="M1100 744l-2 0-14 5-18 1-13 2 0 1 3 1 11-2 17-2 14-4zM1262 718l0 2 4 2 4-1 7 0-2-3zM1141 714l-1-1-1 0-19 11-12 13 0 2 1 0 2-3 3-2 8-8 17-9zM1359 212l-20 0-1 2-1 0 0-2-4 0 0 2-3 7 0 5 2 4 0 4 1 0 1-1 2 2 3 5 0 3-1 2 0 5-4 3 1 6-5 5 0 5-5 5-2 4-5 6-1 5-4 6-2 6-2 2-2 6-8 9-5 9-6 6-3 9-9 13-5 15-6 9-5 13-5 6-1 6-3 4-2 5-3 4-1 4-2 4-2 7-2 3 1 3 0 3-3 3 0 4-3 5 0 13-1 4 0 5-4 10 0 7-1 4-2 10-3 5-1 5-3 3-1 9-2 2 0 2 2 2 3 5 0 9-3 4-3 7 0 15-2 5 0 4-4 6 0 3 2 3-1 4 1 3 0 9 4 8 2 2 2 5 2 2 4 10 5 8 1 4 1 4-1 4 1 4-1 3 2 1 3 0 1 2 1 5 3 6 1 7 3 4 0 8 2 4 0 4 7 7 1-1 2-11 3-26-14-37-3-41 22-56 5-27 2-40 3-66 6-13 12-29 10-19 20-27 2 5 2 2 2-2 4-14 0-3 3 3 7-3 3-2 5-10 4-17 5-15 1-9 0-41z"/>
<path fill="#6b0acd" d="M1141 714l-3 0-18 10-12 12 0 3 1 0 0-2 2-2 2 0 7-8 18-10 3-2zM1359 212l-17 0 0 5 1 3-5 6-1 2 0 2 2 5 1 8 0 9-2 5-2 5-1 3-2 2-4 7-3 3-1 5-8 10-9 18-3 2-1 4-4 3-2 3-3 7-6 5-3 9-7 10 0 2-6 11-1 4-6 10-4 12-5 7-1 5-4 5-4 9-4 10 0 7-2 4-1 8-4 9-1 13-2 6 0 5-2 6-1 8-3 9 0 5-2 3-1 5-3 4-1 6 0 8 2 4 1 9-4 8-3 8 0 11-2 4 0 5-1 4-1 4 1 16 2 9 7 9 4 12 5 8 1 4 2 5 0 7 4 4 2 5 2 8 2 5 1 6 2 4-1 4 2 5 1 4 3 3 2 0 2-8 3-26-14-37-3-41 22-56 5-27 2-40 3-66 6-13 12-29 10-19 20-27 2 5 2 2 2-2 4-14 0-3 3 3 7-3 3-2 5-10 4-17 5-15 1-9 0-41z"/>
<path fill="#9104cb" d="M1141 714l-3 0-19 11-10 11-1 2 0 1 1-2 2-2 3-1 7-8 19-10zM1359 212l-15 0 2 9-2 2-4 2-1 4 2 11 0 15-2 6-1 3-3 5-3 5 0 3-3 2-1 3-10 11 0 4-3 3-6 10-3 4-1 2-6 7-2 8-6 5-1 4-3 6-3 3 0 2-4 6-3 3 0 4-3 4 0 5-3 2-3 6-2 11-8 9-1 4-6 11-1 5-4 8 0 7-2 5 0 6-3 6-3 11-2 11 1 3-2 5-1 10-4 15-5 13-1 11 3 6 0 9-8 16 0 10-2 5 0 13-1 3 0 12 2 8 6 9 2 7 4 7 2 3 1 3 2 3 3 9 5 10 1 6 2 3 0 4 3 8 0 4 2 4 1 11 2 2 2 0 1-6 3-26-14-37-3-41 22-56 5-27 2-40 3-66 6-13 12-29 10-19 20-27 2 5 2 2 2-2 4-14 0-3 3 3 7-3 3-2 5-10 4-17 5-15 1-9 0-41z"/>
<path fill="#9f02c6" d="M1141 714l-2 0-19 10-9 10 3 0 8-8 17-10zM1359 212l-12 0 0 2 3 6-3 4-5 1-1 2 0 4 1 6 0 6 1 2 0 6 1 1 0 4-2 3-1 6-4 5-1 4-2 4-4 3-1 3-4 5 0 5-2 3-5 5-2 2-2 3-2 2-1 4-9 9-2 6 1 9-6 0-2 1-5 15-4 3-1 4-1 1-2 0 2 7-4 3-1 3-4 3-3 7-1 9-9 10-2 6-5 9 0 5-3 4 0 5-2 3 0 7-1 2 0 4-4 7-4 12 1 9-3 9 0 5-5 20 0 4-3 3-1 3-1 11 2 4 3 4 0 8-4 8-4 4-3 6 0 7-1 5 0 8 0 6-1 3-1 13 2 6 6 8 1 5 3 4 1 5 4 1 0 8 2 2 5 12 4 4 2 3-1 5 1 3 1 4 3 7 0 6 2 4 0 8 0 2 2 0 1-3 3-26-14-37-3-41 22-56 5-27 2-40 3-66 6-13 12-29 10-19 20-27 2 5 2 2 2-2 4-14 0-3 3 3 7-3 3-2 5-10 4-17 5-15 1-9 0-41z"/>
<path fill="#ad01c2" d="M1257 668l-5 4 0 2 2 2 3 7 2 0 1-8zM1240 637l-1 3 0 5 2 5 2 2 3 2 2 0 1-3 2-1-5-12zM1241 642l2-2 2 1 0 1-2 1zM1227 589l0 3 3 0 0 1 0 2-2 1-1 0-2-2-3 0 1 5-1 3-1 5 2 3 2 1 7 2 2 3 4-4 6 0-1-15 1-1-2-1-3-3-2 0-2 2-2-1-3 0-1-4zM1256 458l-3 0-2 1-3 0-4 2-1 2 0 4 2 5-2 3-3 10 0 3 1 4-1 4 3 5 5 0 1 1 0 2-1 1-7 0-2 2 3 3 5 0 1 2-2 1-3 2-3-2-3-2-2 0-1 6-4 3 0 4 2 6 6 2-1 7-2 4 0 5 3 3 0 3 4 3 1 3 3 4-2 1-3-3-5-1-2-1-6 1-3 3 0 8-2 3 1 1 4 1 3 2 5 1 1 2 2 6 3 0 2-1 0 3 2 0 1-1 3-9-2-1 0-2 1-2 3 1 0-2-3-3 1-1 4 0 7-18-8-6-5-1 0-2 1-1 7-1 2-3 2 0 2 1 3 1 4-23-2 0-2-3-5-2-1-2 0-3-2-3-1-1-4-1-7-6 0-3 2-3 3-4 2 0 2-2-2-5 1-2 4-1-1-2-2 0-2-2-2-5 0-5 2-2 4 1 1-2zM1237 519l6-3 1 2 3 3 0 2-1 1-3 0-5-3zM1274 421l-2 0-1 1-2 0-2 0-2 4-3 0-6 1 0 2 4 0 4 1 1-1 0-3 2-1 2 2 0 2-3 3-4 5-2 0-4-2-2 0-2 3 4-1 2 2 0 3 3 7 2 0 4-4 1 0 1 1-1 5-6 4 0 1 3 4-2 4-1 2 5 5 1 0 2-2 2 0 1-31-3 0 0-2 1-2 3 0zM1261 416l0 1 5 0 0-2zM1284 376l-1-1-1 1 0 2 2 2-1 2-7 1-2 2 1 2 5 4-1 2-3 1-1 1 1 6-2 1-3-2-3 3-3 1-2 2-1 2 2 1 5 2 6-1 0-2 6-13 7-15-3-2zM1301 345l-4 1-3 2-1 5-2 2-5 3 0 10 4 4 2-2-2 0-2-3-1-2 4-3 3 3 9-18zM1335 304l-2 0-3-3-3-1-4 1-1 2 3 1 1 1-2 1-2 0-2-1-2 1-1 4-12 12-2 4 0 1 8 9 12-16 2 5 2 2 2-2 4-14 0-3 3 3 4-1 0-2zM1330 303l1 1 0 3-1 1-2-3zM1354 273l-7-4-6 3-1 2-2 4-4 6-1 4 0 2 2 1 3-3 3 4 5 0 1-1 3-3 3 1 2-9-3-1 0-2 2-3zM1343 227l-1 3 2 4 0 8 3 5 1 6 2 4 2 2 0 4 3 1 2 2 2 1 2-12 0-15-2 0-7-4 0-4 2-2 0-1-3 0-2-2zM1354 243l2 0 1 1 0 2-2 2-1 0-1-2 0-2zM1351 212l0 2 3 5 0 3 4 4 3 0 0-12-2-2z"/></g></g>
</g>
<!-- selection frame -->
<rect x="288.5" y="115.5" width="1254" height="762" fill="none" stroke="#e2e2ff" stroke-width="1"/>
<rect x="289.5" y="116.5" width="1252" height="760" fill="none" stroke="#7676e2" stroke-width="1"/>
<rect x="291" y="118" width="1249" height="757" fill="none" stroke="#5555a2" stroke-width="2"/>
<!-- mouse cursor -->
<path d="M1900.6 453.3 L1900.6 478.8 L1906.8 473.2 L1911 481.4 L1914.4 480.1 L1910.2 471.5 L1918.7 470.7 Z" fill="#fff"/>
</svg>

<!-- title bar -->
<div id="titlebar" class="abs">
<svg class="abs" style="left:2px;top:3px" width="16" height="16" viewBox="0 0 16 16">
<defs><clipPath id="sq1"><rect x="0" y="0" width="16" height="16" rx="5.5" ry="5.5"/></clipPath></defs>
<g clip-path="url(#sq1)"><rect width="16" height="8" fill="#23907f"/><rect y="8" width="16" height="8" fill="#6ae0c8"/></g>
<path d="M8 3.4 Q11.6 4.4 11.9 7.2 Q12.1 9 11.6 10.2" fill="none" stroke="#f2fbf8" stroke-width="1.5" stroke-linecap="round"/>
<path d="M3.4 8.7 Q4.4 11.3 6.6 12.2 Q8 12.7 9.2 12.5" fill="none" stroke="#f2fbf8" stroke-width="1.5" stroke-linecap="round"/>
<path d="M8.2 8.2 Q9 10.4 10.6 11.4 Q11.6 12 12.6 12.1" fill="none" stroke="#1a6a5c" stroke-width="1.5" stroke-linecap="round"/>
</svg>
<div class="t" style="left:23px;top:5px;font-size:12.2px;line-height:14px;color:#9a9a9a" id="ttl">H-t Screen Capture - Qimera 2.4.8</div>
<svg class="abs" style="left:1780px;top:0" width="140" height="23" viewBox="0 0 140 23">
<path d="M19 10.5 H29" stroke="#8a8a8a" stroke-width="1" fill="none"/>
<path d="M64.5 7.5 H72.5 V15.5 H64.5 Z M66.5 7.5 V5.5 H74.5 V13.5 H72.5" stroke="#8a8a8a" stroke-width="1" fill="none"/>
<path d="M110 5 L120 15 M120 5 L110 15" stroke="#8a8a8a" stroke-width="1" fill="none"/>
</svg>
</div>

<!-- menu bar -->
<div id="menubar" class="abs"></div>
<div class="m" style="left:11px" id="m1"><u>P</u>roject</div>
<div class="m" style="left:66px" id="m2"><u>S</u>ource</div>
<div class="m" style="left:121px" id="m3"><u>L</u>ayer</div>
<div class="m" style="left:167px" id="m4">S<u>c</u>ene</div>
<div class="m" style="left:215px" id="m5"><u>T</u>ools</div>
<div class="m" style="left:262px" id="m6"><u>D</u>ynamic Surface</div>
<div class="m" style="left:373px" id="m7"><u>E</u>xport</div>
<div class="m" style="left:426px" id="m8"><u>W</u>indow</div>
<div class="m" style="left:488px" id="m9"><u>H</u>elp</div>
<div class="abs" style="left:1860px;top:23px;width:60px;height:22px;overflow:hidden"><div class="t" id="qps" style="left:10.4px;top:-0.8px;font-size:22.4px;line-height:24px;font-weight:normal;color:#0b2b49;-webkit-text-stroke:0.8px #0b2b49;transform-origin:0 0;transform:scaleX(0.9)">QPS.</div></div>

<!-- status bar -->
<div id="status" class="abs"></div>
<div class="s" style="left:12px" id="s1">Information not available.</div>
<div class="s" style="left:1053px" id="s2">Auto Import: OFF</div>
<div class="s" style="left:1620px" id="s3">Tiles Loading:</div>
<div class="s" style="left:1728px" id="s4">0</div>
<svg class="abs" style="left:1751px;top:1023px" width="82" height="13" viewBox="0 0 82 13">
<g fill="#dcdcdc" stroke="#b4b4b4" stroke-width="1">
<rect x="1.5" y="1.5" width="6" height="10" rx="1.5"/><rect x="9.4" y="1.5" width="6" height="10" rx="1.5"/><rect x="17.3" y="1.5" width="6" height="10" rx="1.5"/><rect x="25.2" y="1.5" width="6" height="10" rx="1.5"/><rect x="33.1" y="1.5" width="6" height="10" rx="1.5"/><rect x="41" y="1.5" width="6" height="10" rx="1.5"/><rect x="48.9" y="1.5" width="6" height="10" rx="1.5"/><rect x="56.8" y="1.5" width="6" height="10" rx="1.5"/><rect x="64.7" y="1.5" width="6" height="10" rx="1.5"/><rect x="72.6" y="1.5" width="6" height="10" rx="1.5"/>
</g></svg>
<div class="s" style="left:1837px" id="s5">572.8 MB</div>
<svg class="abs" style="left:1902px;top:1021px" width="18" height="17" viewBox="0 0 18 17">
<rect x="2" y="1" width="13" height="14" fill="#e4e4e4"/>
<path d="M2 3.5H15M2 6H15M2 8.500H15M2 11H15M2 13.500H15" stroke="#c8c8c8" stroke-width="0.8"/>
<path d="M1 9.500 L3.500 8 L6.500 11.500 L14.500 1.500 L17 1.500 L7 15.500 Z" fill="#1c7c34"/>
</svg>

<!-- Screen Capture dialog -->
<div id="dlg" class="abs">
<div id="dlgtitle" class="abs"></div>
<svg class="abs" style="left:8px;top:6px" width="16" height="16" viewBox="0 0 16 16">
<defs><clipPath id="sq2"><rect x="0" y="0" width="16" height="16" rx="5.5" ry="5.5"/></clipPath></defs>
<g clip-path="url(#sq2)"><rect width="16" height="8" fill="#23907f"/><rect y="8" width="16" height="8" fill="#6ae0c8"/></g>
<path d="M8 3.4 Q11.6 4.4 11.9 7.2 Q12.1 9 11.6 10.2" fill="none" stroke="#f2fbf8" stroke-width="1.5" stroke-linecap="round"/>
<path d="M3.4 8.7 Q4.4 11.3 6.6 12.2 Q8 12.7 9.2 12.5" fill="none" stroke="#f2fbf8" stroke-width="1.5" stroke-linecap="round"/>
<path d="M8.2 8.2 Q9 10.4 10.6 11.4 Q11.6 12 12.6 12.1" fill="none" stroke="#1a6a5c" stroke-width="1.5" stroke-linecap="round"/>
</svg>
<div class="t" id="dt" style="left:29px;top:8px;font-size:12.2px;line-height:14px">Screen Capture</div>
<svg class="abs" style="left:536px;top:7px" width="14" height="14" viewBox="0 0 14 14"><path d="M1.500 1.500 L11.500 11.500 M11.500 1.500 L1.500 11.500" stroke="#111" stroke-width="1.1" fill="none"/></svg>

<!-- preview -->
<svg class="abs" style="left:11px;top:41px" width="536" height="272" viewBox="0 0 536 272">
<rect width="536" height="272" fill="#000"/>
<g transform="translate(0.34 -13.08) scale(0.279 0.28)"><use href="#bathy"/></g>
<rect x="80.6" y="19.9" width="350.2" height="212.8" fill="none" stroke="#7a7ac4" stroke-width="1.1"/>
</svg>

<div class="lbl" style="top:327px" id="l1">Folder:</div>
<div class="fld" style="left:87px;top:319px;width:435px;height:26px;background:#f0f0f0;color:#222"><div style="position:absolute;left:1px;right:2px;top:7.2px;height:14px;overflow:hidden;direction:rtl;text-align:right;white-space:nowrap"><span id="f1" style="direction:ltr;unicode-bidi:bidi-override;padding-right:1px">C:\Users\isabelle.emery\Desktop\How-to\Screen Capture\H-t Screen Capture\Graphics\Screen Captures</span></div></div>
<div class="btn" style="left:528px;top:323px;width:19px;height:18px;padding-top:2px;background:#f4f4f4">...</div>

<div class="lbl" style="top:359px" id="l2">File Name:</div>
<div class="fld" style="left:87px;top:351px;width:460px;height:26px;background:#fff;padding:7.2px 0 0 2px;color:#222"><span id="f2">Example Screen Capture.png</span></div>

<div class="lbl" style="top:389px" id="l3">Image Format:</div>
<div class="fld" style="left:87px;top:383px;width:460px;height:22px;background:linear-gradient(#ffffff,#f0f0f0);padding:5.4px 0 0 4px"><span id="f3">PNG</span></div>
<svg class="abs" style="left:525px;top:391px" width="12" height="7" viewBox="0 0 12 7"><path d="M0.500 0.800 H11.500 L6 6 Z" fill="#3a3a3a"/></svg>

<div class="lbl" style="top:439px" id="l4">Scale:</div>
<div class="fld" style="left:87px;top:432px;width:42px;height:24px;background:#fff;padding:6px 0 0 5px;color:#222"><span id="f4">1x</span></div>
<div class="abs" style="left:111px;top:433px;width:1px;height:22px;background:#b8b8b8"></div>
<svg class="abs" style="left:112px;top:433px" width="16" height="22" viewBox="0 0 16 22"><rect width="16" height="22" fill="#f4f4f4"/><path d="M3 9 H12.600 L7.800 4 Z" fill="#3a3a3a"/><path d="M3 12.500 H12.600 L7.800 17.500 Z" fill="#a0a0a0"/></svg>

<div class="lbl" style="top:470px" id="l5">Image Size:</div>
<div class="t" id="f5" style="left:87px;top:470px;font-size:10.2px;line-height:12px">1920×973, 1.9 megapixels</div>

<div class="cb" style="left:87px;top:487px"></div>
<div class="t" id="c1" style="left:110px;top:491px;font-size:10.2px;line-height:12px">Make background transparent</div>
<div class="cb" style="left:87px;top:505px;background:#f0f0f0;border-color:#c0c0c0"></div>
<div class="t" id="c2" style="left:110px;top:509px;font-size:10.2px;line-height:12px;color:#8c8c8c">Use only selected area</div>

<div class="btn" style="left:380px;top:529px;width:80px;height:21px;border-color:#5b8fbd;padding-top:4px;box-shadow:inset 0 0 0 1px #d8ecf8" id="b1">OK</div>
<div class="btn" style="left:467px;top:529px;width:80px;height:21px;padding-top:4px" id="b2">Cancel</div>
</div>
</body>
</html>
